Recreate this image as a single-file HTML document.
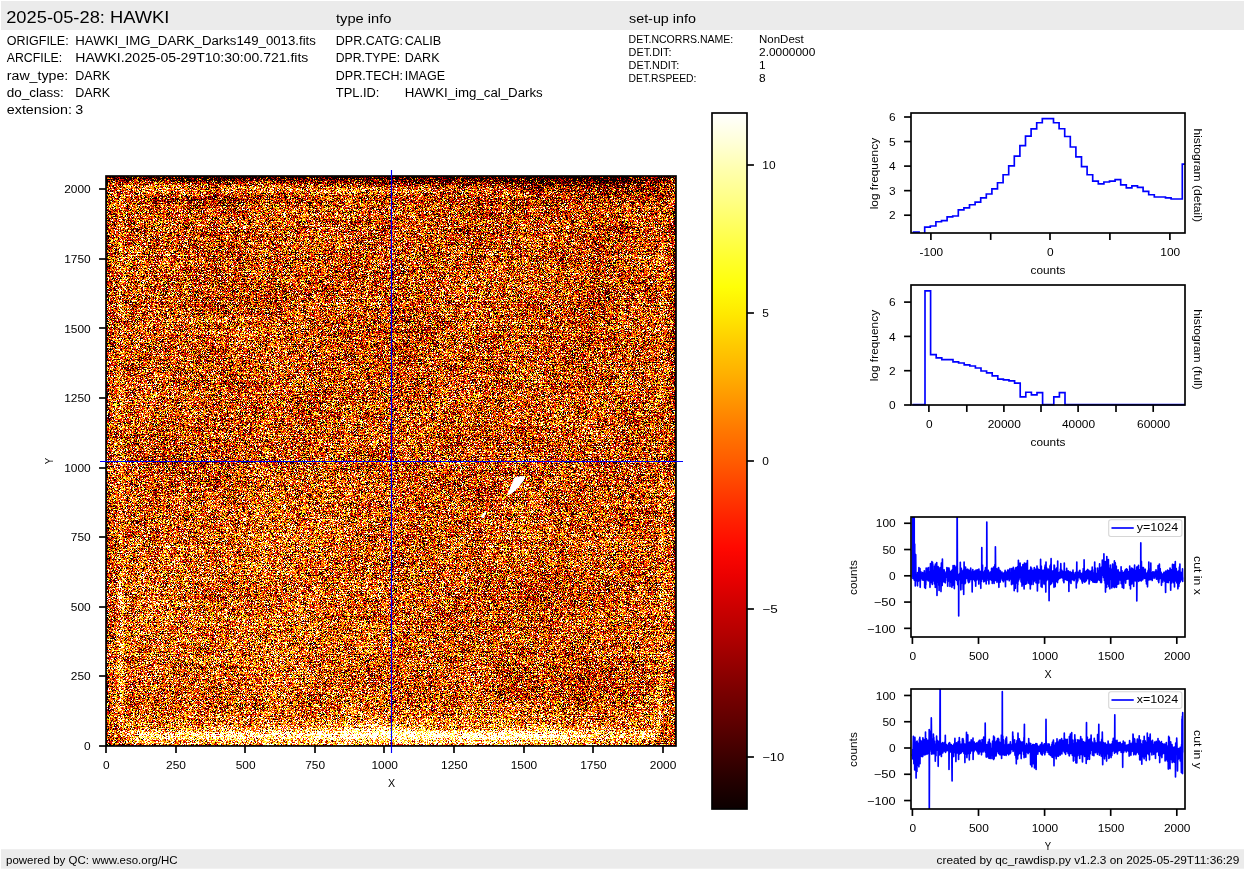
<!DOCTYPE html>
<html><head><meta charset="utf-8"><title>2025-05-28: HAWKI</title>
<style>
html,body{margin:0;padding:0;background:#fff;overflow:hidden}
svg{display:block}
text{font-family:"Liberation Sans",sans-serif;fill:#000;white-space:pre}
svg{will-change:transform}
</style></head><body>
<svg width="1245" height="870" viewBox="0 0 1245 870">
<rect x="0" y="0" width="1245" height="870" fill="#fff"/>
<rect x="1" y="1" width="1243" height="29" fill="#ebebeb"/>
<rect x="1" y="849.2" width="1243" height="19.5" fill="#ebebeb"/>
<text x="6.20" y="23.00" font-size="17.17" textLength="163.12" lengthAdjust="spacingAndGlyphs">2025-05-28: HAWKI</text>
<text x="336.00" y="23.00" font-size="12.88" textLength="55.34" lengthAdjust="spacingAndGlyphs">type info</text>
<text x="629.00" y="23.00" font-size="12.88" textLength="66.89" lengthAdjust="spacingAndGlyphs">set-up info</text>
<text x="6.80" y="45.00" font-size="12.88" textLength="61.85" lengthAdjust="spacingAndGlyphs">ORIGFILE:</text>
<text x="75.30" y="45.00" font-size="12.88" textLength="240.61" lengthAdjust="spacingAndGlyphs">HAWKI_IMG_DARK_Darks149_0013.fits</text>
<text x="6.80" y="62.00" font-size="12.88" textLength="55.29" lengthAdjust="spacingAndGlyphs">ARCFILE:</text>
<text x="75.30" y="62.00" font-size="12.88" textLength="233.00" lengthAdjust="spacingAndGlyphs">HAWKI.2025-05-29T10:30:00.721.fits</text>
<text x="6.80" y="80.00" font-size="12.88" textLength="61.41" lengthAdjust="spacingAndGlyphs">raw_type:</text>
<text x="75.30" y="80.00" font-size="12.88" textLength="34.84" lengthAdjust="spacingAndGlyphs">DARK</text>
<text x="6.80" y="97.00" font-size="12.88" textLength="57.07" lengthAdjust="spacingAndGlyphs">do_class:</text>
<text x="75.30" y="97.00" font-size="12.88" textLength="34.84" lengthAdjust="spacingAndGlyphs">DARK</text>
<text x="6.80" y="114.00" font-size="12.88" textLength="65.15" lengthAdjust="spacingAndGlyphs">extension:</text>
<text x="75.30" y="114.00" font-size="12.88" textLength="7.95" lengthAdjust="spacingAndGlyphs">3</text>
<text x="335.80" y="45.00" font-size="12.88" textLength="67.22" lengthAdjust="spacingAndGlyphs">DPR.CATG:</text>
<text x="404.70" y="45.00" font-size="12.88" textLength="36.51" lengthAdjust="spacingAndGlyphs">CALIB</text>
<text x="335.80" y="62.00" font-size="12.88" textLength="64.29" lengthAdjust="spacingAndGlyphs">DPR.TYPE:</text>
<text x="404.70" y="62.00" font-size="12.88" textLength="34.84" lengthAdjust="spacingAndGlyphs">DARK</text>
<text x="335.80" y="80.00" font-size="12.88" textLength="67.25" lengthAdjust="spacingAndGlyphs">DPR.TECH:</text>
<text x="404.70" y="80.00" font-size="12.88" textLength="40.39" lengthAdjust="spacingAndGlyphs">IMAGE</text>
<text x="335.80" y="97.00" font-size="12.88" textLength="43.63" lengthAdjust="spacingAndGlyphs">TPL.ID:</text>
<text x="404.70" y="97.00" font-size="12.88" textLength="138.03" lengthAdjust="spacingAndGlyphs">HAWKI_img_cal_Darks</text>
<text x="628.60" y="43.00" font-size="10.73" textLength="104.70" lengthAdjust="spacingAndGlyphs">DET.NCORRS.NAME:</text>
<text x="759.00" y="43.00" font-size="10.73" textLength="44.71" lengthAdjust="spacingAndGlyphs">NonDest</text>
<text x="628.60" y="56.00" font-size="10.73" textLength="42.86" lengthAdjust="spacingAndGlyphs">DET.DIT:</text>
<text x="759.00" y="56.00" font-size="10.73" textLength="56.33" lengthAdjust="spacingAndGlyphs">2.0000000</text>
<text x="628.60" y="69.00" font-size="10.73" textLength="50.65" lengthAdjust="spacingAndGlyphs">DET.NDIT:</text>
<text x="759.00" y="69.00" font-size="10.73" textLength="6.63" lengthAdjust="spacingAndGlyphs">1</text>
<text x="628.60" y="82.00" font-size="10.73" textLength="67.87" lengthAdjust="spacingAndGlyphs">DET.RSPEED:</text>
<text x="759.00" y="82.00" font-size="10.73" textLength="6.63" lengthAdjust="spacingAndGlyphs">8</text>
<text x="6.00" y="864.00" font-size="10.73" textLength="171.63" lengthAdjust="spacingAndGlyphs">powered by QC: www.eso.org/HC</text>
<text x="936.59" y="864.00" font-size="10.73" textLength="302.71" lengthAdjust="spacingAndGlyphs">created by qc_rawdisp.py v1.2.3 on 2025-05-29T11:36:29</text>
<defs>
<filter id="noise" filterUnits="userSpaceOnUse" x="106.0" y="176.0" width="570.0" height="570.0" color-interpolation-filters="sRGB">
<feTurbulence type="fractalNoise" baseFrequency="3.17 2.63" numOctaves="2" seed="7" result="t"/>
<feColorMatrix in="t" type="matrix" values="1 0 0 0 0  1 0 0 0 0  1 0 0 0 0  0 0 0 0 1" result="g"/>
<feTurbulence type="fractalNoise" baseFrequency="0.016" numOctaves="3" seed="3" result="t2"/>
<feColorMatrix in="t2" type="matrix" values="0 1 0 0 0  0 1 0 0 0  0 1 0 0 0  0 0 0 0 1" result="l"/>
<feTurbulence type="fractalNoise" baseFrequency="0.007 0.9" numOctaves="1" seed="11" result="t3"/>
<feColorMatrix in="t3" type="matrix" values="1 0 0 0 0  1 0 0 0 0  1 0 0 0 0  0 0 0 0 1" result="s"/>
<feGaussianBlur in="SourceGraphic" stdDeviation="1.6" result="m"/>
<feComposite in="l" in2="m" operator="arithmetic" k1="0" k2="0.1" k3="1" k4="-0.050" result="m2"/>
<feComposite in="s" in2="m2" operator="arithmetic" k1="0" k2="0.25" k3="1" k4="-0.125" result="m3"/>
<feComposite in="g" in2="m3" operator="arithmetic" k1="0" k2="3.1" k3="2" k4="-2.050" result="u"/>
<feColorMatrix in="u" type="matrix" values="1 0 0 0 0  1 0 0 0 0  1 0 0 0 0  0 0 0 0 1" result="u1"/>
<feComponentTransfer in="u1">
<feFuncR type="table" tableValues="0.042 0.093 0.145 0.196 0.247 0.299 0.350 0.402 0.453 0.505 0.556 0.608 0.659 0.711 0.762 0.814 0.865 0.917 0.968 1.000 1.000 1.000 1.000 1.000 1.000 1.000 1.000 1.000 1.000 1.000 1.000 1.000 1.000 1.000 1.000 1.000 1.000 1.000 1.000 1.000 1.000 1.000 1.000 1.000 1.000 1.000 1.000 1.000 1.000 1.000 1.000 1.000"/>
<feFuncG type="table" tableValues="0.000 0.000 0.000 0.000 0.000 0.000 0.000 0.000 0.000 0.000 0.000 0.000 0.000 0.000 0.000 0.000 0.000 0.000 0.000 0.020 0.071 0.123 0.174 0.225 0.277 0.328 0.380 0.431 0.483 0.534 0.586 0.637 0.689 0.740 0.792 0.843 0.895 0.946 0.998 1.000 1.000 1.000 1.000 1.000 1.000 1.000 1.000 1.000 1.000 1.000 1.000 1.000"/>
<feFuncB type="table" tableValues="0.000 0.000 0.000 0.000 0.000 0.000 0.000 0.000 0.000 0.000 0.000 0.000 0.000 0.000 0.000 0.000 0.000 0.000 0.000 0.000 0.000 0.000 0.000 0.000 0.000 0.000 0.000 0.000 0.000 0.000 0.000 0.000 0.000 0.000 0.000 0.000 0.000 0.000 0.000 0.074 0.151 0.228 0.305 0.382 0.460 0.537 0.614 0.691 0.768 0.846 0.923 1.000"/>
</feComponentTransfer>
</filter>
<linearGradient id="gtopL" x1="0" y1="0" x2="0" y2="1"><stop offset="0.000" stop-color="#2d2d2d"/><stop offset="0.180" stop-color="#464646"/><stop offset="0.320" stop-color="#666666"/><stop offset="0.450" stop-color="#808080"/><stop offset="0.800" stop-color="#808080"/><stop offset="1.000" stop-color="#767676"/></linearGradient>
<linearGradient id="gtopR" x1="0" y1="0" x2="0" y2="1"><stop offset="0.000" stop-color="#242424"/><stop offset="0.200" stop-color="#393939"/><stop offset="0.450" stop-color="#525252"/><stop offset="0.750" stop-color="#666666"/><stop offset="1.000" stop-color="#767676"/></linearGradient>
<linearGradient id="gbot" x1="0" y1="0" x2="0" y2="1"><stop offset="0.000" stop-color="#767676"/><stop offset="0.261" stop-color="#808080"/><stop offset="0.435" stop-color="#878787"/><stop offset="0.609" stop-color="#969696"/><stop offset="0.707" stop-color="#bfbfbf"/><stop offset="0.739" stop-color="#d2d2d2"/><stop offset="0.837" stop-color="#d2d2d2"/><stop offset="0.870" stop-color="#9e9e9e"/><stop offset="0.924" stop-color="#9c9c9c"/><stop offset="0.957" stop-color="#b9b9b9"/><stop offset="1.000" stop-color="#b9b9b9"/></linearGradient>
<linearGradient id="hmask" x1="0" y1="0" x2="1" y2="0"><stop offset="0.000" stop-color="#000000"/><stop offset="0.026" stop-color="#adadad"/><stop offset="0.220" stop-color="#d1d1d1"/><stop offset="0.404" stop-color="#ffffff"/><stop offset="0.780" stop-color="#ffffff"/><stop offset="0.881" stop-color="#9e9e9e"/><stop offset="0.972" stop-color="#808080"/><stop offset="0.996" stop-color="#000000"/></linearGradient>
<linearGradient id="hmaskT" x1="0" y1="0" x2="1" y2="0"><stop offset="0" stop-color="#000"/><stop offset="0.35" stop-color="#333"/><stop offset="0.9" stop-color="#fff"/><stop offset="1" stop-color="#fff"/></linearGradient>
<linearGradient id="lstreak" x1="0" y1="0" x2="0" y2="1"><stop offset="0" stop-color="#fff" stop-opacity="0"/><stop offset="0.5" stop-color="#fff" stop-opacity="0.7"/><stop offset="1" stop-color="#fff" stop-opacity="1"/></linearGradient>
<mask id="mH" maskUnits="userSpaceOnUse" x="100" y="690" width="600" height="60"><rect x="120" y="690" width="545" height="60" fill="url(#hmask)"/></mask>
<mask id="mT" maskUnits="userSpaceOnUse" x="100" y="170" width="600" height="40"><rect x="106.0" y="170" width="570.0" height="40" fill="url(#hmaskT)"/></mask>
<radialGradient id="rb1"><stop offset="0" stop-color="#fff" stop-opacity="0.07"/><stop offset="0.6" stop-color="#fff" stop-opacity="0.042"/><stop offset="1" stop-color="#fff" stop-opacity="0"/></radialGradient>
<radialGradient id="rb2"><stop offset="0" stop-color="#000" stop-opacity="0.07"/><stop offset="0.6" stop-color="#000" stop-opacity="0.042"/><stop offset="1" stop-color="#000" stop-opacity="0"/></radialGradient>
<radialGradient id="rb3"><stop offset="0" stop-color="#000" stop-opacity="0.03"/><stop offset="0.6" stop-color="#000" stop-opacity="0.018"/><stop offset="1" stop-color="#000" stop-opacity="0"/></radialGradient>
</defs>
<clipPath id="imclip"><rect x="106.0" y="176.0" width="570.0" height="570.0"/></clipPath>
<g filter="url(#noise)"><g clip-path="url(#imclip)">
<rect x="106.0" y="176.0" width="570.0" height="570.0" fill="#767676"/>
<ellipse cx="260" cy="600" rx="210" ry="170" fill="url(#rb1)"/>
<ellipse cx="575" cy="690" rx="120" ry="50" fill="url(#rb2)"/>
<ellipse cx="560" cy="270" rx="200" ry="140" fill="url(#rb3)"/>
<rect x="106.0" y="176.0" width="570.0" height="20" fill="url(#gtopL)"/>
<rect x="106.0" y="176.0" width="570.0" height="22" fill="url(#gtopR)" mask="url(#mT)"/>
<path d="M130,236 L130,214 Q130,200 144,200 L600,200" fill="none" stroke="#696969" stroke-width="8"/>
<rect x="640" y="176.0" width="36" height="26" fill="#5c5c5c" opacity="0.6"/>
<rect x="668" y="176.0" width="8" height="300" fill="#696969" opacity="0.8"/>
<rect x="120" y="700" width="545" height="46" fill="url(#gbot)" mask="url(#mH)"/>
<path d="M121,460 L121,204 Q121,190 135,190 L520,190" fill="none" stroke="#8c8c8c" stroke-width="4.5" opacity="0.8"/>
<path d="M661,250 L661,460" fill="none" stroke="#868686" stroke-width="4.5" opacity="0.7"/>
<path d="M121,440 L121,600" fill="none" stroke="#8f8f8f" stroke-width="4.5" opacity="0.8"/>
<path d="M661,440 L661,705" fill="none" stroke="#8a8a8a" stroke-width="4.5" opacity="0.8"/>
<path d="M121,580 L121,722 Q121,735 135,735" fill="none" stroke="#a3a3a3" stroke-width="4.5" stroke-linecap="round" opacity="0.9"/>
<path d="M640,736 Q660,736 660,718 L660,700" fill="none" stroke="#b5b5b5" stroke-width="4.5" stroke-linecap="round" opacity="0.9"/>
<rect x="106.0" y="734" width="13" height="12" fill="#6a6a6a"/>
</g></g>
<path d="M515,477.5 L524.5,476.5 L523,481 L516,489.5 L511,493.5 L508,494.5 L510.5,488 L513.5,481 Z" fill="#fff" stroke="#fff" stroke-width="1" stroke-linejoin="round"/>
<path d="M482.3,516.5 L485,513.2" stroke="#fff" stroke-width="2.6" stroke-linecap="round"/>
<rect x="106.00" y="176.00" width="570.00" height="570.00" fill="none" stroke="#000" stroke-width="1.67" stroke-linejoin="miter"/>
<line x1="106.00" y1="746.00" x2="106.00" y2="752.94" stroke="#000" stroke-width="1.67" stroke-linecap="butt"/>
<line x1="106.00" y1="746.00" x2="99.06" y2="746.00" stroke="#000" stroke-width="1.67" stroke-linecap="butt"/>
<text x="103.13" y="769.00" font-size="10.73" textLength="6.63" lengthAdjust="spacingAndGlyphs">0</text>
<text x="84.07" y="750.00" font-size="10.73" textLength="6.63" lengthAdjust="spacingAndGlyphs">0</text>
<line x1="176.00" y1="746.00" x2="176.00" y2="752.94" stroke="#000" stroke-width="1.67" stroke-linecap="butt"/>
<line x1="106.00" y1="676.00" x2="99.06" y2="676.00" stroke="#000" stroke-width="1.67" stroke-linecap="butt"/>
<text x="166.08" y="769.00" font-size="10.73" textLength="19.88" lengthAdjust="spacingAndGlyphs">250</text>
<text x="70.82" y="680.00" font-size="10.73" textLength="19.88" lengthAdjust="spacingAndGlyphs">250</text>
<line x1="245.00" y1="746.00" x2="245.00" y2="752.94" stroke="#000" stroke-width="1.67" stroke-linecap="butt"/>
<line x1="106.00" y1="607.00" x2="99.06" y2="607.00" stroke="#000" stroke-width="1.67" stroke-linecap="butt"/>
<text x="235.66" y="769.00" font-size="10.73" textLength="19.88" lengthAdjust="spacingAndGlyphs">500</text>
<text x="70.82" y="611.00" font-size="10.73" textLength="19.88" lengthAdjust="spacingAndGlyphs">500</text>
<line x1="315.00" y1="746.00" x2="315.00" y2="752.94" stroke="#000" stroke-width="1.67" stroke-linecap="butt"/>
<line x1="106.00" y1="537.00" x2="99.06" y2="537.00" stroke="#000" stroke-width="1.67" stroke-linecap="butt"/>
<text x="305.24" y="769.00" font-size="10.73" textLength="19.88" lengthAdjust="spacingAndGlyphs">750</text>
<text x="70.82" y="541.00" font-size="10.73" textLength="19.88" lengthAdjust="spacingAndGlyphs">750</text>
<line x1="384.00" y1="746.00" x2="384.00" y2="752.94" stroke="#000" stroke-width="1.67" stroke-linecap="butt"/>
<line x1="106.00" y1="468.00" x2="99.06" y2="468.00" stroke="#000" stroke-width="1.67" stroke-linecap="butt"/>
<text x="371.50" y="769.00" font-size="10.73" textLength="26.51" lengthAdjust="spacingAndGlyphs">1000</text>
<text x="64.19" y="472.00" font-size="10.73" textLength="26.51" lengthAdjust="spacingAndGlyphs">1000</text>
<line x1="454.00" y1="746.00" x2="454.00" y2="752.94" stroke="#000" stroke-width="1.67" stroke-linecap="butt"/>
<line x1="106.00" y1="398.00" x2="99.06" y2="398.00" stroke="#000" stroke-width="1.67" stroke-linecap="butt"/>
<text x="441.08" y="769.00" font-size="10.73" textLength="26.51" lengthAdjust="spacingAndGlyphs">1250</text>
<text x="64.19" y="402.00" font-size="10.73" textLength="26.51" lengthAdjust="spacingAndGlyphs">1250</text>
<line x1="524.00" y1="746.00" x2="524.00" y2="752.94" stroke="#000" stroke-width="1.67" stroke-linecap="butt"/>
<line x1="106.00" y1="328.00" x2="99.06" y2="328.00" stroke="#000" stroke-width="1.67" stroke-linecap="butt"/>
<text x="510.66" y="769.00" font-size="10.73" textLength="26.51" lengthAdjust="spacingAndGlyphs">1500</text>
<text x="64.19" y="333.00" font-size="10.73" textLength="26.51" lengthAdjust="spacingAndGlyphs">1500</text>
<line x1="593.00" y1="746.00" x2="593.00" y2="752.94" stroke="#000" stroke-width="1.67" stroke-linecap="butt"/>
<line x1="106.00" y1="259.00" x2="99.06" y2="259.00" stroke="#000" stroke-width="1.67" stroke-linecap="butt"/>
<text x="580.24" y="769.00" font-size="10.73" textLength="26.51" lengthAdjust="spacingAndGlyphs">1750</text>
<text x="64.19" y="263.00" font-size="10.73" textLength="26.51" lengthAdjust="spacingAndGlyphs">1750</text>
<line x1="663.00" y1="746.00" x2="663.00" y2="752.94" stroke="#000" stroke-width="1.67" stroke-linecap="butt"/>
<line x1="106.00" y1="189.00" x2="99.06" y2="189.00" stroke="#000" stroke-width="1.67" stroke-linecap="butt"/>
<text x="649.82" y="769.00" font-size="10.73" textLength="26.51" lengthAdjust="spacingAndGlyphs">2000</text>
<text x="64.19" y="193.00" font-size="10.73" textLength="26.51" lengthAdjust="spacingAndGlyphs">2000</text>
<text x="388.03" y="787.00" font-size="10.73" textLength="7.14" lengthAdjust="spacingAndGlyphs">X</text>
<text transform="translate(53.00,461.00) rotate(-90)" x="-3.18" y="0" font-size="10.73" textLength="6.36" lengthAdjust="spacingAndGlyphs">Y</text>
<line x1="391.50" y1="170.00" x2="391.50" y2="753.00" stroke="#0000ff" stroke-width="1.15" stroke-linecap="butt"/>
<line x1="100.00" y1="461.50" x2="683.00" y2="461.50" stroke="#0000ff" stroke-width="1.15" stroke-linecap="butt"/>
<defs><linearGradient id="cb" x1="0" y1="0" x2="0" y2="1"><stop offset="0.0000" stop-color="#ffffff"/><stop offset="0.0417" stop-color="#ffffd8"/><stop offset="0.0833" stop-color="#ffffac"/><stop offset="0.1250" stop-color="#ffff85"/><stop offset="0.1667" stop-color="#ffff5a"/><stop offset="0.2083" stop-color="#ffff2e"/><stop offset="0.2500" stop-color="#ffff07"/><stop offset="0.2917" stop-color="#ffe700"/><stop offset="0.3333" stop-color="#ffca00"/><stop offset="0.3750" stop-color="#ffb000"/><stop offset="0.4167" stop-color="#ff9300"/><stop offset="0.4583" stop-color="#ff7600"/><stop offset="0.5000" stop-color="#ff5c00"/><stop offset="0.5417" stop-color="#ff3f00"/><stop offset="0.5833" stop-color="#ff2200"/><stop offset="0.6250" stop-color="#ff0800"/><stop offset="0.6667" stop-color="#ea0000"/><stop offset="0.7083" stop-color="#cd0000"/><stop offset="0.7500" stop-color="#b30000"/><stop offset="0.7917" stop-color="#960000"/><stop offset="0.8333" stop-color="#790000"/><stop offset="0.8750" stop-color="#5f0000"/><stop offset="0.9167" stop-color="#420000"/><stop offset="0.9583" stop-color="#250000"/><stop offset="1.0000" stop-color="#0b0000"/></linearGradient></defs>
<rect x="712.0" y="113.0" width="35.0" height="696.0" fill="url(#cb)"/>
<rect x="712.00" y="113.00" width="35.00" height="696.00" fill="none" stroke="#000" stroke-width="1.67" stroke-linejoin="miter"/>
<line x1="747.00" y1="165.00" x2="753.94" y2="165.00" stroke="#000" stroke-width="1.67" stroke-linecap="butt"/>
<text x="762.30" y="168.90" font-size="10.73" textLength="13.25" lengthAdjust="spacingAndGlyphs">10</text>
<line x1="747.00" y1="313.00" x2="753.94" y2="313.00" stroke="#000" stroke-width="1.67" stroke-linecap="butt"/>
<text x="762.30" y="316.90" font-size="10.73" textLength="6.63" lengthAdjust="spacingAndGlyphs">5</text>
<line x1="747.00" y1="461.00" x2="753.94" y2="461.00" stroke="#000" stroke-width="1.67" stroke-linecap="butt"/>
<text x="762.30" y="464.90" font-size="10.73" textLength="6.63" lengthAdjust="spacingAndGlyphs">0</text>
<line x1="747.00" y1="609.00" x2="753.94" y2="609.00" stroke="#000" stroke-width="1.67" stroke-linecap="butt"/>
<text x="762.30" y="612.90" font-size="10.73" textLength="15.36" lengthAdjust="spacingAndGlyphs">−5</text>
<line x1="747.00" y1="757.00" x2="753.94" y2="757.00" stroke="#000" stroke-width="1.67" stroke-linecap="butt"/>
<text x="762.30" y="760.90" font-size="10.73" textLength="21.98" lengthAdjust="spacingAndGlyphs">−10</text>
<clipPath id="c1"><rect x="911.0" y="113.0" width="274.0" height="120.0"/></clipPath>
<path d="M907.90,243.00L913.50,243.00L913.50,232.07L919.10,232.07L919.10,235.41L924.70,235.41L924.70,227.07L930.30,227.07L930.30,226.00L935.90,226.00L935.90,221.76L941.50,221.76L941.50,220.70L947.10,220.70L947.10,216.90L952.70,216.90L952.70,215.99L958.30,215.99L958.30,209.93L963.90,209.93L963.90,207.80L969.50,207.80L969.50,204.77L975.10,204.77L975.10,202.04L980.70,202.04L980.70,197.79L986.30,197.79L986.30,194.00L991.90,194.00L991.90,188.84L997.50,188.84L997.50,182.78L1003.10,182.78L1003.10,174.74L1008.70,174.74L1008.70,165.94L1014.30,165.94L1014.30,156.08L1019.90,156.08L1019.90,145.62L1025.50,145.62L1025.50,136.06L1031.10,136.06L1031.10,128.93L1036.70,128.93L1036.70,122.71L1042.30,122.71L1042.30,118.62L1047.90,118.62L1047.90,118.62L1053.50,118.62L1053.50,122.71L1059.10,122.71L1059.10,128.78L1064.70,128.78L1064.70,136.52L1070.30,136.52L1070.30,146.98L1075.90,146.98L1075.90,156.84L1081.50,156.84L1081.50,166.70L1087.10,166.70L1087.10,174.74L1092.70,174.74L1092.70,181.11L1098.30,181.11L1098.30,183.84L1103.90,183.84L1103.90,182.02L1109.50,182.02L1109.50,181.11L1115.10,181.11L1115.10,179.59L1120.70,179.59L1120.70,184.90L1126.30,184.90L1126.30,187.93L1131.90,187.93L1131.90,185.81L1137.50,185.81L1137.50,187.33L1143.10,187.33L1143.10,191.42L1148.70,191.42L1148.70,194.76L1154.30,194.76L1154.30,197.03L1159.90,197.03L1159.90,197.03L1165.50,197.03L1165.50,197.94L1171.10,197.94L1171.10,199.01L1176.70,199.01L1176.70,199.01L1182.30,199.01L1182.30,164.12L1187.90,164.12" fill="none" stroke="#0000ff" stroke-width="1.67" stroke-linejoin="miter" clip-path="url(#c1)"/>
<rect x="911.00" y="113.00" width="274.00" height="120.00" fill="none" stroke="#000" stroke-width="1.67" stroke-linejoin="miter"/>
<line x1="930.90" y1="233.00" x2="930.90" y2="239.94" stroke="#000" stroke-width="1.67" stroke-linecap="butt"/>
<text x="919.48" y="256.00" font-size="10.73" textLength="23.64" lengthAdjust="spacingAndGlyphs">-100</text>
<line x1="990.70" y1="233.00" x2="990.70" y2="239.94" stroke="#000" stroke-width="1.67" stroke-linecap="butt"/>
<line x1="1050.00" y1="233.00" x2="1050.00" y2="239.94" stroke="#000" stroke-width="1.67" stroke-linecap="butt"/>
<text x="1047.09" y="256.00" font-size="10.73" textLength="6.63" lengthAdjust="spacingAndGlyphs">0</text>
<line x1="1109.90" y1="233.00" x2="1109.90" y2="239.94" stroke="#000" stroke-width="1.67" stroke-linecap="butt"/>
<line x1="1169.90" y1="233.00" x2="1169.90" y2="239.94" stroke="#000" stroke-width="1.67" stroke-linecap="butt"/>
<text x="1160.36" y="256.00" font-size="10.73" textLength="19.88" lengthAdjust="spacingAndGlyphs">100</text>
<line x1="911.00" y1="117.00" x2="904.06" y2="117.00" stroke="#000" stroke-width="1.67" stroke-linecap="butt"/>
<text x="889.07" y="121.00" font-size="10.73" textLength="6.63" lengthAdjust="spacingAndGlyphs">6</text>
<line x1="911.00" y1="141.55" x2="904.06" y2="141.55" stroke="#000" stroke-width="1.67" stroke-linecap="butt"/>
<text x="889.07" y="146.00" font-size="10.73" textLength="6.63" lengthAdjust="spacingAndGlyphs">5</text>
<line x1="911.00" y1="166.10" x2="904.06" y2="166.10" stroke="#000" stroke-width="1.67" stroke-linecap="butt"/>
<text x="889.07" y="170.00" font-size="10.73" textLength="6.63" lengthAdjust="spacingAndGlyphs">4</text>
<line x1="911.00" y1="190.65" x2="904.06" y2="190.65" stroke="#000" stroke-width="1.67" stroke-linecap="butt"/>
<text x="889.07" y="195.00" font-size="10.73" textLength="6.63" lengthAdjust="spacingAndGlyphs">3</text>
<line x1="911.00" y1="215.20" x2="904.06" y2="215.20" stroke="#000" stroke-width="1.67" stroke-linecap="butt"/>
<text x="889.07" y="219.00" font-size="10.73" textLength="6.63" lengthAdjust="spacingAndGlyphs">2</text>
<text x="1030.59" y="274.00" font-size="10.73" textLength="34.82" lengthAdjust="spacingAndGlyphs">counts</text>
<text transform="translate(877.60,173.60) rotate(-90)" x="-35.72" y="0" font-size="10.73" textLength="71.44" lengthAdjust="spacingAndGlyphs">log frequency</text>
<text transform="translate(1193.90,175.20) rotate(90)" x="-46.76" y="0" font-size="10.73" textLength="93.52" lengthAdjust="spacingAndGlyphs">histogram (detail)</text>
<clipPath id="c2"><rect x="911.0" y="284.0" width="274.0" height="122.0"/></clipPath>
<path d="M912.50,404.68L925.00,404.68L925.00,290.92L930.60,290.92L930.60,354.62L936.20,354.62L936.20,357.81L941.80,357.81L941.80,359.63L947.40,359.63L947.40,359.63L953.00,359.63L953.00,361.91L958.60,361.91L958.60,362.97L964.20,362.97L964.20,364.94L969.80,364.94L969.80,366.00L975.40,366.00L975.40,367.97L981.00,367.97L981.00,371.01L986.60,371.01L986.60,372.83L992.20,372.83L992.20,375.86L997.80,375.86L997.80,379.04L1003.40,379.04L1003.40,379.80L1009.00,379.80L1009.00,380.86L1014.60,380.86L1014.60,383.14L1020.20,383.14L1020.20,396.79L1025.80,396.79L1025.80,392.24L1031.40,392.24L1031.40,394.82L1037.00,394.82L1037.00,392.70L1042.60,392.70L1042.60,404.68L1048.20,404.68L1048.20,404.68L1053.80,404.68L1053.80,396.79L1059.40,396.79L1059.40,392.70L1065.00,392.70L1065.00,404.68L1186.00,404.68" fill="none" stroke="#0000ff" stroke-width="1.67" stroke-linejoin="miter" clip-path="url(#c2)"/>
<rect x="911.00" y="285.00" width="274.00" height="120.00" fill="none" stroke="#000" stroke-width="1.67" stroke-linejoin="miter"/>
<line x1="928.90" y1="405.00" x2="928.90" y2="411.94" stroke="#000" stroke-width="1.67" stroke-linecap="butt"/>
<text x="925.99" y="428.00" font-size="10.73" textLength="6.63" lengthAdjust="spacingAndGlyphs">0</text>
<line x1="966.80" y1="405.00" x2="966.80" y2="411.94" stroke="#000" stroke-width="1.67" stroke-linecap="butt"/>
<line x1="1003.90" y1="405.00" x2="1003.90" y2="411.94" stroke="#000" stroke-width="1.67" stroke-linecap="butt"/>
<text x="987.73" y="428.00" font-size="10.73" textLength="33.14" lengthAdjust="spacingAndGlyphs">20000</text>
<line x1="1041.00" y1="405.00" x2="1041.00" y2="411.94" stroke="#000" stroke-width="1.67" stroke-linecap="butt"/>
<line x1="1078.10" y1="405.00" x2="1078.10" y2="411.94" stroke="#000" stroke-width="1.67" stroke-linecap="butt"/>
<text x="1061.93" y="428.00" font-size="10.73" textLength="33.14" lengthAdjust="spacingAndGlyphs">40000</text>
<line x1="1116.00" y1="405.00" x2="1116.00" y2="411.94" stroke="#000" stroke-width="1.67" stroke-linecap="butt"/>
<line x1="1153.20" y1="405.00" x2="1153.20" y2="411.94" stroke="#000" stroke-width="1.67" stroke-linecap="butt"/>
<text x="1137.03" y="428.00" font-size="10.73" textLength="33.14" lengthAdjust="spacingAndGlyphs">60000</text>
<line x1="911.00" y1="405.00" x2="904.06" y2="405.00" stroke="#000" stroke-width="1.67" stroke-linecap="butt"/>
<text x="889.07" y="409.00" font-size="10.73" textLength="6.63" lengthAdjust="spacingAndGlyphs">0</text>
<line x1="911.00" y1="370.70" x2="904.06" y2="370.70" stroke="#000" stroke-width="1.67" stroke-linecap="butt"/>
<text x="889.07" y="375.00" font-size="10.73" textLength="6.63" lengthAdjust="spacingAndGlyphs">2</text>
<line x1="911.00" y1="336.40" x2="904.06" y2="336.40" stroke="#000" stroke-width="1.67" stroke-linecap="butt"/>
<text x="889.07" y="341.00" font-size="10.73" textLength="6.63" lengthAdjust="spacingAndGlyphs">4</text>
<line x1="911.00" y1="302.10" x2="904.06" y2="302.10" stroke="#000" stroke-width="1.67" stroke-linecap="butt"/>
<text x="889.07" y="306.00" font-size="10.73" textLength="6.63" lengthAdjust="spacingAndGlyphs">6</text>
<text x="1030.59" y="446.00" font-size="10.73" textLength="34.82" lengthAdjust="spacingAndGlyphs">counts</text>
<text transform="translate(877.60,345.60) rotate(-90)" x="-35.72" y="0" font-size="10.73" textLength="71.44" lengthAdjust="spacingAndGlyphs">log frequency</text>
<text transform="translate(1193.90,349.50) rotate(90)" x="-40.15" y="0" font-size="10.73" textLength="80.30" lengthAdjust="spacingAndGlyphs">histogram (full)</text>
<clipPath id="c3"><rect x="911.0" y="517.0" width="274.0" height="120.0"/></clipPath>
<polyline points="912.3,577.9 912.4,574.6 912.6,511.0 912.7,574.6 912.8,578.3 913.0,575.4 913.1,511.0 913.2,577.8 913.4,570.4 913.5,571.4 913.6,511.0 913.8,578.9 913.9,575.7 914.0,571.5 914.2,511.0 914.3,580.2 914.4,569.4 914.5,578.7 914.7,544.2 914.8,577.0 914.9,577.5 915.1,574.3 915.2,575.9 915.3,586.0 915.5,574.6 915.6,573.6 915.7,554.7 915.9,578.4 916.0,578.2 916.1,580.6 916.3,579.0 916.4,575.6 916.5,575.8 916.7,576.5 916.8,578.4 916.9,576.7 917.1,578.5 917.2,579.2 917.3,575.1 917.5,585.8 917.6,572.6 917.7,573.8 917.9,581.0 918.0,575.0 918.1,578.6 918.2,575.6 918.4,575.6 918.5,581.1 918.6,576.3 918.8,576.4 918.9,567.5 919.0,579.0 919.2,573.7 919.3,578.8 919.4,576.6 919.6,578.1 919.7,571.6 919.8,574.1 920.0,568.7 920.1,573.8 920.2,587.3 920.4,573.2 920.5,577.5 920.6,575.9 920.8,571.7 920.9,576.9 921.0,575.1 921.2,575.8 921.3,573.8 921.4,576.8 921.6,576.2 921.7,574.9 921.8,575.4 921.9,578.4 922.1,572.8 922.2,579.9 922.3,579.6 922.5,579.9 922.6,572.5 922.7,576.9 922.9,578.9 923.0,579.5 923.1,574.3 923.3,579.3 923.4,580.1 923.5,573.6 923.7,578.8 923.8,576.8 923.9,575.7 924.1,577.3 924.2,575.9 924.3,570.8 924.5,577.6 924.6,580.3 924.7,587.6 924.9,576.5 925.0,577.0 925.1,574.7 925.3,577.5 925.4,577.5 925.5,588.3 925.6,577.7 925.8,584.9 925.9,577.2 926.0,575.3 926.2,568.1 926.3,573.8 926.4,578.0 926.6,568.7 926.7,574.3 926.8,579.6 927.0,571.7 927.1,575.6 927.2,578.3 927.4,578.4 927.5,579.9 927.6,575.5 927.8,571.1 927.9,577.1 928.0,573.9 928.2,567.5 928.3,581.0 928.4,574.6 928.6,577.1 928.7,580.4 928.8,580.3 929.0,575.8 929.1,573.8 929.2,578.1 929.3,575.5 929.5,576.9 929.6,574.3 929.7,571.7 929.9,573.6 930.0,587.3 930.1,567.2 930.3,572.8 930.4,575.1 930.5,563.5 930.7,580.0 930.8,577.3 930.9,572.0 931.1,572.7 931.2,568.3 931.3,575.7 931.5,582.7 931.6,566.4 931.7,570.5 931.9,561.7 932.0,573.9 932.1,575.5 932.3,584.5 932.4,577.7 932.5,562.3 932.7,568.0 932.8,564.3 932.9,576.9 933.0,577.0 933.2,577.5 933.3,580.2 933.4,574.6 933.6,570.4 933.7,572.6 933.8,573.8 934.0,581.3 934.1,575.1 934.2,579.2 934.4,578.8 934.5,583.9 934.6,566.1 934.8,571.2 934.9,580.5 935.0,571.2 935.2,569.1 935.3,587.4 935.4,564.2 935.6,577.6 935.7,572.5 935.8,576.3 936.0,576.8 936.1,576.0 936.2,566.7 936.4,565.2 936.5,577.3 936.6,580.2 936.7,562.6 936.9,580.5 937.0,595.5 937.1,575.5 937.3,573.4 937.4,570.7 937.5,573.8 937.7,579.9 937.8,573.3 937.9,574.5 938.1,566.7 938.2,567.1 938.3,582.1 938.5,580.7 938.6,568.8 938.7,578.3 938.9,585.7 939.0,578.4 939.1,590.4 939.3,570.1 939.4,580.5 939.5,572.6 939.7,572.0 939.8,579.0 939.9,576.6 940.1,567.5 940.2,567.7 940.3,571.7 940.4,574.2 940.6,570.5 940.7,576.3 940.8,576.1 941.0,591.6 941.1,585.5 941.2,576.1 941.4,563.1 941.5,576.6 941.6,571.9 941.8,569.7 941.9,576.5 942.0,570.4 942.2,585.5 942.3,575.3 942.4,559.1 942.6,575.1 942.7,580.9 942.8,571.0 943.0,576.8 943.1,580.6 943.2,577.4 943.4,578.1 943.5,572.5 943.6,573.7 943.8,576.9 943.9,578.6 944.0,582.1 944.1,569.9 944.3,574.2 944.4,572.9 944.5,581.0 944.7,581.4 944.8,578.8 944.9,572.9 945.1,575.2 945.2,579.6 945.3,582.8 945.5,575.2 945.6,580.7 945.7,577.2 945.9,577.1 946.0,574.5 946.1,574.4 946.3,571.5 946.4,571.6 946.5,575.1 946.7,572.2 946.8,577.2 946.9,567.5 947.1,573.5 947.2,577.1 947.3,573.3 947.5,570.6 947.6,579.2 947.7,586.2 947.8,570.4 948.0,575.6 948.1,572.6 948.2,581.6 948.4,568.0 948.5,572.4 948.6,576.3 948.8,577.3 948.9,575.2 949.0,568.1 949.2,577.7 949.3,580.7 949.4,570.0 949.6,575.9 949.7,576.3 949.8,571.2 950.0,586.4 950.1,573.3 950.2,577.2 950.4,577.0 950.5,575.4 950.6,580.2 950.8,571.8 950.9,578.9 951.0,579.9 951.2,579.7 951.3,575.0 951.4,572.2 951.5,578.5 951.7,582.8 951.8,570.7 951.9,587.3 952.1,570.1 952.2,576.0 952.3,579.0 952.5,578.7 952.6,585.5 952.7,571.4 952.9,576.7 953.0,571.1 953.1,565.6 953.3,576.7 953.4,576.0 953.5,580.8 953.7,582.5 953.8,578.8 953.9,579.2 954.1,582.2 954.2,573.1 954.3,588.6 954.5,582.2 954.6,565.7 954.7,570.5 954.9,573.1 955.0,573.4 955.1,566.8 955.2,573.0 955.4,575.3 955.5,570.7 955.6,576.1 955.8,579.4 955.9,579.3 956.0,579.3 956.2,575.9 956.3,577.4 956.4,571.8 956.6,580.3 956.7,576.6 956.8,566.1 957.0,575.5 957.1,511.0 957.2,511.0 957.4,568.9 957.5,571.9 957.6,582.9 957.8,584.7 957.9,577.7 958.0,583.8 958.2,578.1 958.3,582.2 958.4,584.4 958.6,574.6 958.7,616.0 958.8,579.3 958.9,580.7 959.1,578.5 959.2,577.8 959.3,577.8 959.5,576.0 959.6,578.0 959.7,573.7 959.9,573.0 960.0,573.8 960.1,579.2 960.3,562.3 960.4,573.4 960.5,576.7 960.7,575.9 960.8,588.7 960.9,589.8 961.1,573.9 961.2,574.0 961.3,568.4 961.5,571.9 961.6,574.5 961.7,575.6 961.9,583.1 962.0,571.1 962.1,578.8 962.3,573.1 962.4,575.7 962.5,574.3 962.6,571.1 962.8,578.2 962.9,577.7 963.0,580.0 963.2,589.4 963.3,587.3 963.4,577.5 963.6,569.8 963.7,594.4 963.8,575.7 964.0,571.7 964.1,562.2 964.2,573.9 964.4,567.9 964.5,579.1 964.6,578.3 964.8,579.0 964.9,583.7 965.0,580.9 965.2,568.7 965.3,577.5 965.4,583.0 965.6,567.2 965.7,571.1 965.8,573.3 966.0,573.2 966.1,577.4 966.2,578.5 966.3,572.4 966.5,577.0 966.6,571.5 966.7,573.4 966.9,577.8 967.0,576.6 967.1,570.8 967.3,569.3 967.4,578.4 967.5,570.4 967.7,570.3 967.8,569.3 967.9,576.5 968.1,581.3 968.2,577.3 968.3,577.9 968.5,574.8 968.6,582.7 968.7,570.4 968.9,574.5 969.0,573.9 969.1,580.5 969.3,575.8 969.4,570.4 969.5,581.9 969.7,574.5 969.8,573.0 969.9,578.4 970.0,572.5 970.2,577.0 970.3,571.0 970.4,573.7 970.6,579.6 970.7,568.2 970.8,572.6 971.0,570.9 971.1,573.7 971.2,578.1 971.4,572.7 971.5,572.5 971.6,575.9 971.8,572.9 971.9,579.4 972.0,575.0 972.2,592.0 972.3,574.5 972.4,577.4 972.6,577.9 972.7,575.5 972.8,569.6 973.0,578.4 973.1,577.7 973.2,572.2 973.4,577.1 973.5,579.1 973.6,575.0 973.7,575.4 973.9,574.6 974.0,571.6 974.1,573.6 974.3,574.1 974.4,574.9 974.5,580.6 974.7,578.4 974.8,571.1 974.9,573.2 975.1,574.2 975.2,573.8 975.3,581.7 975.5,574.7 975.6,578.4 975.7,586.2 975.9,577.8 976.0,570.0 976.1,574.4 976.3,576.7 976.4,573.8 976.5,576.5 976.7,574.7 976.8,571.9 976.9,580.0 977.1,573.6 977.2,573.9 977.3,573.0 977.4,569.9 977.6,573.5 977.7,573.3 977.8,578.2 978.0,573.6 978.1,573.8 978.2,578.7 978.4,578.3 978.5,576.0 978.6,574.9 978.8,584.1 978.9,569.0 979.0,575.0 979.2,576.2 979.3,574.9 979.4,574.4 979.6,578.6 979.7,579.0 979.8,576.4 980.0,578.4 980.1,575.1 980.2,571.4 980.4,579.9 980.5,574.3 980.6,580.5 980.8,588.3 980.9,574.1 981.0,575.9 981.2,578.0 981.3,578.4 981.4,581.6 981.5,575.2 981.7,574.9 981.8,547.5 981.9,578.8 982.1,577.9 982.2,575.8 982.3,575.0 982.5,565.1 982.6,571.6 982.7,572.5 982.9,571.6 983.0,579.2 983.1,576.1 983.3,572.2 983.4,574.8 983.5,575.6 983.7,581.8 983.8,581.5 983.9,573.4 984.1,574.6 984.2,576.6 984.3,577.0 984.5,581.2 984.6,574.5 984.7,572.4 984.9,570.3 985.0,575.5 985.1,576.4 985.2,579.3 985.4,571.7 985.5,567.7 985.6,569.0 985.8,574.7 985.9,575.4 986.0,577.6 986.2,584.0 986.3,576.9 986.4,573.7 986.6,580.5 986.7,578.5 986.8,522.1 987.0,571.3 987.1,574.0 987.2,575.5 987.4,576.6 987.5,577.9 987.6,576.0 987.8,576.8 987.9,576.6 988.0,575.8 988.2,575.3 988.3,570.3 988.4,580.8 988.6,574.8 988.7,577.9 988.8,579.7 988.9,584.0 989.1,573.6 989.2,579.2 989.3,578.4 989.5,574.1 989.6,579.6 989.7,575.6 989.9,576.0 990.0,572.9 990.1,572.1 990.3,578.8 990.4,572.5 990.5,576.1 990.7,575.3 990.8,576.5 990.9,572.9 991.1,580.1 991.2,574.8 991.3,571.5 991.5,576.8 991.6,568.4 991.7,578.4 991.9,577.2 992.0,577.5 992.1,578.0 992.3,583.4 992.4,577.7 992.5,575.9 992.6,568.7 992.8,572.6 992.9,570.3 993.0,581.2 993.2,572.8 993.3,575.1 993.4,574.9 993.6,567.0 993.7,571.5 993.8,574.6 994.0,575.1 994.1,583.4 994.2,573.0 994.4,578.3 994.5,575.1 994.6,575.4 994.8,572.3 994.9,564.7 995.0,572.3 995.2,571.3 995.3,576.5 995.4,546.8 995.6,568.0 995.7,580.6 995.8,568.7 996.0,578.1 996.1,580.1 996.2,570.1 996.3,568.5 996.5,578.1 996.6,577.8 996.7,574.5 996.9,575.3 997.0,582.3 997.1,577.7 997.3,569.1 997.4,573.5 997.5,573.2 997.7,570.3 997.8,573.5 997.9,576.8 998.1,580.9 998.2,574.3 998.3,579.3 998.5,567.5 998.6,575.2 998.7,568.1 998.9,587.3 999.0,575.5 999.1,580.5 999.3,572.8 999.4,579.8 999.5,575.1 999.7,570.3 999.8,573.4 999.9,573.0 1000.0,577.8 1000.2,582.1 1000.3,578.1 1000.4,570.8 1000.6,575.9 1000.7,578.3 1000.8,576.1 1001.0,576.0 1001.1,576.0 1001.2,576.8 1001.4,578.0 1001.5,573.8 1001.6,572.7 1001.8,577.4 1001.9,577.3 1002.0,572.1 1002.2,580.1 1002.3,577.5 1002.4,576.8 1002.6,575.2 1002.7,576.5 1002.8,578.3 1003.0,576.2 1003.1,579.2 1003.2,580.8 1003.4,581.7 1003.5,573.5 1003.6,580.8 1003.7,573.0 1003.9,573.7 1004.0,573.3 1004.1,576.2 1004.3,577.3 1004.4,575.4 1004.5,577.5 1004.7,579.5 1004.8,572.0 1004.9,578.4 1005.1,570.4 1005.2,574.2 1005.3,577.1 1005.5,586.7 1005.6,572.0 1005.7,579.8 1005.9,578.5 1006.0,577.7 1006.1,575.2 1006.3,574.5 1006.4,575.6 1006.5,577.9 1006.7,577.3 1006.8,572.0 1006.9,572.2 1007.1,575.3 1007.2,579.8 1007.3,573.7 1007.4,574.8 1007.6,574.9 1007.7,570.2 1007.8,573.1 1008.0,578.8 1008.1,578.8 1008.2,571.2 1008.4,575.0 1008.5,572.8 1008.6,570.3 1008.8,578.8 1008.9,574.6 1009.0,570.3 1009.2,580.8 1009.3,579.3 1009.4,576.5 1009.6,577.2 1009.7,574.8 1009.8,571.9 1010.0,568.5 1010.1,574.6 1010.2,576.9 1010.4,575.1 1010.5,575.3 1010.6,576.9 1010.8,575.3 1010.9,575.4 1011.0,579.7 1011.1,573.3 1011.3,576.7 1011.4,579.0 1011.5,584.6 1011.7,577.2 1011.8,568.7 1011.9,573.5 1012.1,575.0 1012.2,578.3 1012.3,576.9 1012.5,572.0 1012.6,578.1 1012.7,572.3 1012.9,583.8 1013.0,574.6 1013.1,572.0 1013.3,567.4 1013.4,575.4 1013.5,571.2 1013.7,579.0 1013.8,579.5 1013.9,574.9 1014.1,570.2 1014.2,590.7 1014.3,576.2 1014.5,577.2 1014.6,573.4 1014.7,580.9 1014.8,587.8 1015.0,579.9 1015.1,582.1 1015.2,576.9 1015.4,588.3 1015.5,568.2 1015.6,577.2 1015.8,574.9 1015.9,575.5 1016.0,567.6 1016.2,577.5 1016.3,577.1 1016.4,569.3 1016.6,577.3 1016.7,583.1 1016.8,569.0 1017.0,573.6 1017.1,572.3 1017.2,572.1 1017.4,570.8 1017.5,591.7 1017.6,566.6 1017.8,585.0 1017.9,574.5 1018.0,574.0 1018.2,577.4 1018.3,571.8 1018.4,560.3 1018.5,580.9 1018.7,570.9 1018.8,570.3 1018.9,575.8 1019.1,579.2 1019.2,568.9 1019.3,571.7 1019.5,575.7 1019.6,576.8 1019.7,573.7 1019.9,570.1 1020.0,570.4 1020.1,563.0 1020.3,576.8 1020.4,571.7 1020.5,577.2 1020.7,570.8 1020.8,574.2 1020.9,578.0 1021.1,581.9 1021.2,578.9 1021.3,573.6 1021.5,567.1 1021.6,570.8 1021.7,581.2 1021.9,577.5 1022.0,586.2 1022.1,575.6 1022.2,574.7 1022.4,570.9 1022.5,574.0 1022.6,578.9 1022.8,583.3 1022.9,564.6 1023.0,584.3 1023.2,576.3 1023.3,573.8 1023.4,582.6 1023.6,576.3 1023.7,577.4 1023.8,565.6 1024.0,584.8 1024.1,588.9 1024.2,573.5 1024.4,563.0 1024.5,576.9 1024.6,577.9 1024.8,572.8 1024.9,572.5 1025.0,573.7 1025.2,581.2 1025.3,577.4 1025.4,584.2 1025.6,583.9 1025.7,579.0 1025.8,581.6 1025.9,578.3 1026.1,563.3 1026.2,573.6 1026.3,580.8 1026.5,581.9 1026.6,580.6 1026.7,583.6 1026.9,573.5 1027.0,572.6 1027.1,571.8 1027.3,574.1 1027.4,560.6 1027.5,575.0 1027.7,575.7 1027.8,574.6 1027.9,577.7 1028.1,580.5 1028.2,577.4 1028.3,570.6 1028.5,577.7 1028.6,583.1 1028.7,582.5 1028.9,581.4 1029.0,576.2 1029.1,573.9 1029.3,573.9 1029.4,570.4 1029.5,577.2 1029.6,572.1 1029.8,574.6 1029.9,572.7 1030.0,584.9 1030.2,570.1 1030.3,589.0 1030.4,581.3 1030.6,572.2 1030.7,577.7 1030.8,567.0 1031.0,575.1 1031.1,580.7 1031.2,584.6 1031.4,577.7 1031.5,568.6 1031.6,568.3 1031.8,572.4 1031.9,577.6 1032.0,575.4 1032.2,571.0 1032.3,579.4 1032.4,579.4 1032.6,571.9 1032.7,572.4 1032.8,576.8 1033.0,577.0 1033.1,584.5 1033.2,570.4 1033.3,576.3 1033.5,582.1 1033.6,580.8 1033.7,579.7 1033.9,575.2 1034.0,572.7 1034.1,581.6 1034.3,567.5 1034.4,572.2 1034.5,580.4 1034.7,576.4 1034.8,571.5 1034.9,578.3 1035.1,576.3 1035.2,578.0 1035.3,570.2 1035.5,569.3 1035.6,572.2 1035.7,576.4 1035.9,574.6 1036.0,582.8 1036.1,582.5 1036.3,570.3 1036.4,577.1 1036.5,574.6 1036.7,575.1 1036.8,571.8 1036.9,571.1 1037.0,566.1 1037.2,577.2 1037.3,579.6 1037.4,590.9 1037.6,578.5 1037.7,568.3 1037.8,579.1 1038.0,575.0 1038.1,571.5 1038.2,571.2 1038.4,582.8 1038.5,569.5 1038.6,570.0 1038.8,583.0 1038.9,574.0 1039.0,574.8 1039.2,576.9 1039.3,578.4 1039.4,575.4 1039.6,573.9 1039.7,574.3 1039.8,569.6 1040.0,571.2 1040.1,578.1 1040.2,578.9 1040.4,571.8 1040.5,578.6 1040.6,559.4 1040.7,573.4 1040.9,571.0 1041.0,573.2 1041.1,586.6 1041.3,566.1 1041.4,572.5 1041.5,578.5 1041.7,574.7 1041.8,575.0 1041.9,579.7 1042.1,587.3 1042.2,571.2 1042.3,573.9 1042.5,574.9 1042.6,578.7 1042.7,577.0 1042.9,573.4 1043.0,575.4 1043.1,570.2 1043.3,575.0 1043.4,579.3 1043.5,572.7 1043.7,578.4 1043.8,574.5 1043.9,583.9 1044.1,577.2 1044.2,572.9 1044.3,578.6 1044.4,575.7 1044.6,572.8 1044.7,575.2 1044.8,567.2 1045.0,576.8 1045.1,576.4 1045.2,565.0 1045.4,584.9 1045.5,582.8 1045.6,573.0 1045.8,592.1 1045.9,569.0 1046.0,562.0 1046.2,576.4 1046.3,577.6 1046.4,574.3 1046.6,567.9 1046.7,580.6 1046.8,573.5 1047.0,572.3 1047.1,572.9 1047.2,570.0 1047.4,570.6 1047.5,575.4 1047.6,578.2 1047.8,570.8 1047.9,575.3 1048.0,570.9 1048.2,569.0 1048.3,575.8 1048.4,579.7 1048.5,576.6 1048.7,571.6 1048.8,576.5 1048.9,569.7 1049.1,600.7 1049.2,574.7 1049.3,578.3 1049.5,580.8 1049.6,570.1 1049.7,576.9 1049.9,576.9 1050.0,565.8 1050.1,571.6 1050.3,584.6 1050.4,578.4 1050.5,571.0 1050.7,564.4 1050.8,576.4 1050.9,570.9 1051.1,558.7 1051.2,577.1 1051.3,574.0 1051.5,581.1 1051.6,583.6 1051.7,577.7 1051.9,574.2 1052.0,573.7 1052.1,574.9 1052.2,571.9 1052.4,572.3 1052.5,581.7 1052.6,577.2 1052.8,577.7 1052.9,570.9 1053.0,577.6 1053.2,571.0 1053.3,575.1 1053.4,581.7 1053.6,575.2 1053.7,575.4 1053.8,575.9 1054.0,587.3 1054.1,565.0 1054.2,577.6 1054.4,565.6 1054.5,576.3 1054.6,572.6 1054.8,579.6 1054.9,572.2 1055.0,571.9 1055.2,586.6 1055.3,576.5 1055.4,578.7 1055.6,576.6 1055.7,578.7 1055.8,570.5 1055.9,569.0 1056.1,576.7 1056.2,575.7 1056.3,581.5 1056.5,578.0 1056.6,568.0 1056.7,574.5 1056.9,575.1 1057.0,572.4 1057.1,575.2 1057.3,577.0 1057.4,570.0 1057.5,582.6 1057.7,561.0 1057.8,578.3 1057.9,578.2 1058.1,580.0 1058.2,576.4 1058.3,574.6 1058.5,575.8 1058.6,573.6 1058.7,575.5 1058.9,578.5 1059.0,578.8 1059.1,572.7 1059.3,576.6 1059.4,572.6 1059.5,574.4 1059.6,572.1 1059.8,572.4 1059.9,572.1 1060.0,578.2 1060.2,577.3 1060.3,573.3 1060.4,569.2 1060.6,573.8 1060.7,574.7 1060.8,563.7 1061.0,573.1 1061.1,577.2 1061.2,576.4 1061.4,575.8 1061.5,572.8 1061.6,577.6 1061.8,575.3 1061.9,570.4 1062.0,577.2 1062.2,573.3 1062.3,577.2 1062.4,575.9 1062.6,574.4 1062.7,573.2 1062.8,577.0 1063.0,578.5 1063.1,571.5 1063.2,575.2 1063.3,581.0 1063.5,573.2 1063.6,573.7 1063.7,576.4 1063.9,582.6 1064.0,579.7 1064.1,575.2 1064.3,563.1 1064.4,575.7 1064.5,572.2 1064.7,573.9 1064.8,575.5 1064.9,579.1 1065.1,573.8 1065.2,571.8 1065.3,577.7 1065.5,574.6 1065.6,577.0 1065.7,576.0 1065.9,576.6 1066.0,579.7 1066.1,576.9 1066.3,579.7 1066.4,571.9 1066.5,573.1 1066.7,568.4 1066.8,575.0 1066.9,575.5 1067.0,575.2 1067.2,580.5 1067.3,576.3 1067.4,576.1 1067.6,579.0 1067.7,578.1 1067.8,577.2 1068.0,575.2 1068.1,576.6 1068.2,570.9 1068.4,576.1 1068.5,576.6 1068.6,574.6 1068.8,573.1 1068.9,591.5 1069.0,573.2 1069.2,577.2 1069.3,576.1 1069.4,573.0 1069.6,575.0 1069.7,573.6 1069.8,572.0 1070.0,571.5 1070.1,581.8 1070.2,572.7 1070.4,575.2 1070.5,579.9 1070.6,579.2 1070.7,572.3 1070.9,573.9 1071.0,583.4 1071.1,576.9 1071.3,572.5 1071.4,573.0 1071.5,577.0 1071.7,573.9 1071.8,575.5 1071.9,576.2 1072.1,572.7 1072.2,572.4 1072.3,577.1 1072.5,578.3 1072.6,579.4 1072.7,579.7 1072.9,571.8 1073.0,570.2 1073.1,575.0 1073.3,572.5 1073.4,577.6 1073.5,575.8 1073.7,572.8 1073.8,574.6 1073.9,574.3 1074.1,580.6 1074.2,580.0 1074.3,576.9 1074.4,577.3 1074.6,575.8 1074.7,577.5 1074.8,576.3 1075.0,575.4 1075.1,578.6 1075.2,575.4 1075.4,577.3 1075.5,576.5 1075.6,572.6 1075.8,576.2 1075.9,578.7 1076.0,578.0 1076.2,574.6 1076.3,587.9 1076.4,571.5 1076.6,576.7 1076.7,571.0 1076.8,562.0 1077.0,583.0 1077.1,577.5 1077.2,573.8 1077.4,572.0 1077.5,575.7 1077.6,577.3 1077.8,581.0 1077.9,575.1 1078.0,576.8 1078.1,576.3 1078.3,577.8 1078.4,574.6 1078.5,576.1 1078.7,574.0 1078.8,572.2 1078.9,575.7 1079.1,574.5 1079.2,576.3 1079.3,576.1 1079.5,570.7 1079.6,572.4 1079.7,573.5 1079.9,570.3 1080.0,577.9 1080.1,575.2 1080.3,579.0 1080.4,574.7 1080.5,575.2 1080.7,573.1 1080.8,575.5 1080.9,573.3 1081.1,577.4 1081.2,573.4 1081.3,576.7 1081.5,577.2 1081.6,575.3 1081.7,574.3 1081.8,580.8 1082.0,581.2 1082.1,574.9 1082.2,575.8 1082.4,583.1 1082.5,581.9 1082.6,578.5 1082.8,574.4 1082.9,573.6 1083.0,571.9 1083.2,571.3 1083.3,568.6 1083.4,580.9 1083.6,575.8 1083.7,571.7 1083.8,580.2 1084.0,580.8 1084.1,559.9 1084.2,571.6 1084.4,571.0 1084.5,582.1 1084.6,580.1 1084.8,576.0 1084.9,577.5 1085.0,574.4 1085.2,578.3 1085.3,581.7 1085.4,575.8 1085.5,574.9 1085.7,575.3 1085.8,571.6 1085.9,579.6 1086.1,574.2 1086.2,575.3 1086.3,580.7 1086.5,571.3 1086.6,573.7 1086.7,570.6 1086.9,574.7 1087.0,573.2 1087.1,575.1 1087.3,573.5 1087.4,577.0 1087.5,569.5 1087.7,578.7 1087.8,569.5 1087.9,576.2 1088.1,572.5 1088.2,575.0 1088.3,574.0 1088.5,576.2 1088.6,575.0 1088.7,578.8 1088.9,574.7 1089.0,570.7 1089.1,584.0 1089.2,572.1 1089.4,571.7 1089.5,581.6 1089.6,576.0 1089.8,572.7 1089.9,579.5 1090.0,577.0 1090.2,576.7 1090.3,573.6 1090.4,571.7 1090.6,575.6 1090.7,575.3 1090.8,572.3 1091.0,573.7 1091.1,575.9 1091.2,571.0 1091.4,580.3 1091.5,575.0 1091.6,577.0 1091.8,577.2 1091.9,574.8 1092.0,575.4 1092.2,567.2 1092.3,573.3 1092.4,574.3 1092.6,569.9 1092.7,572.1 1092.8,581.9 1092.9,575.1 1093.1,573.0 1093.2,577.6 1093.3,572.9 1093.5,577.1 1093.6,574.3 1093.7,581.1 1093.9,582.2 1094.0,577.4 1094.1,574.8 1094.3,574.4 1094.4,576.5 1094.5,578.2 1094.7,562.0 1094.8,575.4 1094.9,569.3 1095.1,575.9 1095.2,582.4 1095.3,578.4 1095.5,568.0 1095.6,580.5 1095.7,578.3 1095.9,578.0 1096.0,576.6 1096.1,577.6 1096.3,574.1 1096.4,574.1 1096.5,575.0 1096.6,574.9 1096.8,582.5 1096.9,581.7 1097.0,573.3 1097.2,574.7 1097.3,581.0 1097.4,577.2 1097.6,574.7 1097.7,568.1 1097.8,574.6 1098.0,577.6 1098.1,571.4 1098.2,574.8 1098.4,576.8 1098.5,570.8 1098.6,579.2 1098.8,574.9 1098.9,575.3 1099.0,572.1 1099.2,580.2 1099.3,578.3 1099.4,577.2 1099.6,563.9 1099.7,575.5 1099.8,577.2 1100.0,573.9 1100.1,572.8 1100.2,574.8 1100.3,580.1 1100.5,570.9 1100.6,582.2 1100.7,570.1 1100.9,571.9 1101.0,578.4 1101.1,582.7 1101.3,567.4 1101.4,568.9 1101.5,582.5 1101.7,571.4 1101.8,578.0 1101.9,574.0 1102.1,573.7 1102.2,575.3 1102.3,560.2 1102.5,573.2 1102.6,560.3 1102.7,573.9 1102.9,574.3 1103.0,566.2 1103.1,572.4 1103.3,575.4 1103.4,571.6 1103.5,572.8 1103.7,575.8 1103.8,577.6 1103.9,553.9 1104.0,575.1 1104.2,567.8 1104.3,573.7 1104.4,580.4 1104.6,572.0 1104.7,572.2 1104.8,573.6 1105.0,567.4 1105.1,583.3 1105.2,561.5 1105.4,572.8 1105.5,592.1 1105.6,580.3 1105.8,573.0 1105.9,581.9 1106.0,580.6 1106.2,581.8 1106.3,568.2 1106.4,577.9 1106.6,575.5 1106.7,587.3 1106.8,556.6 1107.0,573.3 1107.1,584.5 1107.2,584.3 1107.4,566.9 1107.5,580.8 1107.6,582.9 1107.7,578.3 1107.9,576.1 1108.0,569.8 1108.1,573.0 1108.3,572.1 1108.4,559.6 1108.5,576.9 1108.7,570.5 1108.8,573.9 1108.9,586.6 1109.1,570.8 1109.2,579.2 1109.3,568.7 1109.5,578.4 1109.6,578.1 1109.7,577.2 1109.9,588.8 1110.0,569.3 1110.1,579.3 1110.3,576.9 1110.4,565.1 1110.5,575.1 1110.7,570.8 1110.8,573.9 1110.9,571.5 1111.1,574.2 1111.2,569.4 1111.3,576.9 1111.5,573.2 1111.6,579.7 1111.7,569.2 1111.8,587.9 1112.0,571.4 1112.1,573.8 1112.2,573.9 1112.4,575.8 1112.5,568.4 1112.6,564.1 1112.8,579.0 1112.9,586.3 1113.0,581.7 1113.2,580.2 1113.3,576.5 1113.4,576.1 1113.6,569.9 1113.7,578.1 1113.8,576.0 1114.0,575.2 1114.1,587.5 1114.2,577.5 1114.4,560.9 1114.5,576.3 1114.6,580.9 1114.8,587.4 1114.9,570.2 1115.0,577.5 1115.2,579.1 1115.3,562.9 1115.4,568.2 1115.5,584.8 1115.7,577.6 1115.8,570.6 1115.9,571.4 1116.1,581.5 1116.2,566.6 1116.3,566.3 1116.5,587.3 1116.6,584.8 1116.7,582.9 1116.9,572.4 1117.0,570.3 1117.1,574.9 1117.3,578.8 1117.4,576.3 1117.5,573.0 1117.7,573.9 1117.8,584.2 1117.9,576.2 1118.1,569.8 1118.2,583.5 1118.3,574.9 1118.5,579.1 1118.6,571.4 1118.7,584.0 1118.9,576.1 1119.0,578.6 1119.1,576.5 1119.2,580.2 1119.4,572.3 1119.5,576.2 1119.6,578.6 1119.8,573.5 1119.9,576.1 1120.0,578.2 1120.2,578.5 1120.3,572.3 1120.4,580.1 1120.6,576.9 1120.7,577.1 1120.8,574.5 1121.0,576.7 1121.1,566.8 1121.2,583.6 1121.4,573.2 1121.5,576.0 1121.6,571.9 1121.8,582.9 1121.9,570.6 1122.0,581.8 1122.2,572.9 1122.3,587.4 1122.4,575.7 1122.6,579.0 1122.7,579.3 1122.8,575.5 1122.9,579.0 1123.1,584.1 1123.2,583.4 1123.3,572.5 1123.5,572.4 1123.6,573.7 1123.7,588.3 1123.9,574.3 1124.0,573.8 1124.1,574.8 1124.3,579.1 1124.4,578.8 1124.5,580.5 1124.7,575.2 1124.8,571.4 1124.9,576.4 1125.1,570.5 1125.2,577.3 1125.3,571.9 1125.5,569.5 1125.6,583.1 1125.7,581.5 1125.9,573.9 1126.0,578.6 1126.1,573.6 1126.3,573.0 1126.4,577.8 1126.5,572.5 1126.6,568.8 1126.8,572.0 1126.9,579.2 1127.0,576.3 1127.2,577.9 1127.3,569.5 1127.4,576.5 1127.6,578.4 1127.7,575.5 1127.8,578.8 1128.0,577.2 1128.1,575.3 1128.2,575.7 1128.4,572.8 1128.5,571.8 1128.6,574.6 1128.8,577.5 1128.9,574.1 1129.0,579.2 1129.2,571.4 1129.3,574.3 1129.4,574.7 1129.6,585.3 1129.7,566.2 1129.8,577.3 1130.0,570.6 1130.1,575.1 1130.2,572.9 1130.3,569.7 1130.5,588.9 1130.6,582.0 1130.7,573.2 1130.9,575.0 1131.0,574.1 1131.1,579.5 1131.3,572.9 1131.4,580.8 1131.5,568.1 1131.7,572.2 1131.8,573.1 1131.9,584.0 1132.1,575.0 1132.2,573.4 1132.3,579.5 1132.5,568.6 1132.6,574.3 1132.7,577.3 1132.9,581.2 1133.0,575.9 1133.1,576.2 1133.3,572.7 1133.4,571.0 1133.5,575.3 1133.7,586.5 1133.8,569.4 1133.9,572.8 1134.0,576.4 1134.2,572.8 1134.3,577.6 1134.4,573.5 1134.6,565.2 1134.7,580.0 1134.8,572.8 1135.0,575.0 1135.1,572.3 1135.2,581.0 1135.4,570.7 1135.5,570.5 1135.6,576.9 1135.8,575.8 1135.9,575.2 1136.0,575.5 1136.2,571.9 1136.3,578.4 1136.4,580.3 1136.6,576.4 1136.7,567.4 1136.8,600.9 1137.0,579.7 1137.1,566.8 1137.2,574.8 1137.4,570.5 1137.5,578.6 1137.6,574.8 1137.7,574.6 1137.9,573.5 1138.0,574.9 1138.1,571.1 1138.3,572.6 1138.4,578.1 1138.5,565.3 1138.7,581.3 1138.8,581.1 1138.9,571.2 1139.1,574.7 1139.2,576.6 1139.3,569.6 1139.5,572.7 1139.6,577.3 1139.7,578.2 1139.9,579.9 1140.0,579.1 1140.1,578.9 1140.3,580.3 1140.4,574.4 1140.5,573.3 1140.7,577.9 1140.8,542.9 1140.9,574.8 1141.1,573.6 1141.2,572.8 1141.3,581.0 1141.4,561.4 1141.6,573.5 1141.7,578.4 1141.8,579.2 1142.0,575.7 1142.1,580.0 1142.2,576.1 1142.4,567.6 1142.5,577.3 1142.6,572.1 1142.8,579.7 1142.9,575.3 1143.0,576.7 1143.2,576.3 1143.3,572.7 1143.4,567.5 1143.6,576.1 1143.7,570.7 1143.8,574.3 1144.0,572.9 1144.1,577.4 1144.2,575.6 1144.4,576.4 1144.5,578.4 1144.6,575.7 1144.8,572.2 1144.9,575.6 1145.0,575.0 1145.1,569.2 1145.3,569.6 1145.4,573.9 1145.5,577.4 1145.7,573.5 1145.8,572.8 1145.9,573.7 1146.1,578.5 1146.2,581.6 1146.3,575.8 1146.5,584.0 1146.6,576.3 1146.7,574.4 1146.9,574.4 1147.0,574.1 1147.1,573.2 1147.3,582.0 1147.4,576.1 1147.5,586.8 1147.7,575.9 1147.8,571.9 1147.9,576.8 1148.1,572.8 1148.2,570.3 1148.3,576.4 1148.5,575.5 1148.6,576.5 1148.7,573.4 1148.8,562.0 1149.0,579.9 1149.1,576.4 1149.2,573.1 1149.4,573.9 1149.5,577.9 1149.6,574.7 1149.8,575.3 1149.9,577.3 1150.0,574.1 1150.2,572.0 1150.3,575.8 1150.4,579.7 1150.6,568.5 1150.7,575.3 1150.8,563.1 1151.0,578.2 1151.1,574.9 1151.2,578.7 1151.4,575.4 1151.5,579.0 1151.6,576.8 1151.8,579.5 1151.9,578.1 1152.0,579.6 1152.2,580.5 1152.3,572.5 1152.4,572.6 1152.5,574.4 1152.7,576.5 1152.8,571.9 1152.9,576.3 1153.1,574.5 1153.2,572.8 1153.3,575.0 1153.5,572.0 1153.6,575.9 1153.7,572.7 1153.9,575.2 1154.0,578.3 1154.1,578.1 1154.3,573.7 1154.4,576.4 1154.5,572.8 1154.7,573.6 1154.8,572.7 1154.9,573.7 1155.1,574.1 1155.2,571.4 1155.3,575.7 1155.5,575.8 1155.6,572.8 1155.7,577.1 1155.9,577.2 1156.0,569.8 1156.1,576.7 1156.2,578.6 1156.4,572.8 1156.5,571.0 1156.6,579.2 1156.8,578.5 1156.9,573.4 1157.0,574.1 1157.2,575.0 1157.3,575.3 1157.4,576.6 1157.6,577.9 1157.7,577.4 1157.8,574.0 1158.0,572.8 1158.1,565.5 1158.2,578.3 1158.4,581.4 1158.5,574.2 1158.6,576.0 1158.8,582.6 1158.9,571.9 1159.0,580.1 1159.2,575.7 1159.3,576.8 1159.4,564.1 1159.6,574.9 1159.7,575.2 1159.8,575.5 1159.9,573.9 1160.1,578.3 1160.2,568.7 1160.3,575.1 1160.5,577.0 1160.6,577.2 1160.7,574.4 1160.9,578.7 1161.0,572.2 1161.1,572.6 1161.3,576.0 1161.4,573.2 1161.5,585.3 1161.7,574.4 1161.8,579.5 1161.9,579.1 1162.1,579.1 1162.2,575.3 1162.3,576.3 1162.5,575.8 1162.6,579.1 1162.7,575.9 1162.9,581.9 1163.0,579.4 1163.1,578.1 1163.3,573.6 1163.4,577.6 1163.5,578.7 1163.6,574.6 1163.8,575.9 1163.9,572.4 1164.0,574.5 1164.2,574.9 1164.3,576.3 1164.4,573.3 1164.6,578.2 1164.7,581.1 1164.8,572.4 1165.0,577.4 1165.1,575.5 1165.2,573.4 1165.4,571.9 1165.5,586.4 1165.6,592.5 1165.8,571.1 1165.9,582.1 1166.0,573.9 1166.2,577.1 1166.3,579.1 1166.4,576.2 1166.6,582.2 1166.7,574.1 1166.8,571.1 1167.0,581.3 1167.1,579.4 1167.2,571.0 1167.3,574.2 1167.5,577.0 1167.6,570.0 1167.7,582.5 1167.9,576.8 1168.0,575.3 1168.1,577.0 1168.3,572.5 1168.4,582.6 1168.5,575.5 1168.7,579.0 1168.8,570.8 1168.9,571.4 1169.1,578.8 1169.2,580.3 1169.3,575.9 1169.5,579.3 1169.6,578.1 1169.7,573.9 1169.9,577.7 1170.0,568.1 1170.1,575.4 1170.3,578.0 1170.4,580.5 1170.5,578.0 1170.7,590.2 1170.8,573.4 1170.9,569.6 1171.0,570.1 1171.2,573.4 1171.3,578.7 1171.4,576.4 1171.6,575.4 1171.7,582.9 1171.8,574.3 1172.0,580.2 1172.1,576.1 1172.2,578.0 1172.4,573.2 1172.5,564.4 1172.6,580.9 1172.8,575.8 1172.9,566.9 1173.0,570.7 1173.2,576.7 1173.3,574.7 1173.4,574.4 1173.6,582.7 1173.7,574.4 1173.8,571.9 1174.0,564.7 1174.1,576.0 1174.2,578.2 1174.4,580.9 1174.5,586.9 1174.6,574.3 1174.7,569.0 1174.9,575.8 1175.0,575.8 1175.1,576.7 1175.3,561.5 1175.4,581.0 1175.5,569.1 1175.7,577.6 1175.8,577.6 1175.9,568.6 1176.1,575.6 1176.2,577.4 1176.3,568.7 1176.5,574.9 1176.6,571.7 1176.7,578.0 1176.9,583.0 1177.0,574.9 1177.1,580.3 1177.3,577.5 1177.4,574.1 1177.5,572.6 1177.7,574.5 1177.8,575.3 1177.9,588.8 1178.1,574.7 1178.2,577.8 1178.3,571.2 1178.5,572.3 1178.6,574.0 1178.7,572.6 1178.8,586.4 1179.0,574.5 1179.1,575.4 1179.2,583.7 1179.4,567.1 1179.5,574.1 1179.6,577.3 1179.8,577.1 1179.9,564.1 1180.0,575.6 1180.2,582.0 1180.3,577.1 1180.4,573.7 1180.6,574.0 1180.7,572.0 1180.8,579.8 1181.0,578.1 1181.1,575.2 1181.2,578.0 1181.4,574.6 1181.5,578.8 1181.6,573.1 1181.8,575.2 1181.9,573.1 1182.0,579.2 1182.2,578.6 1182.3,572.2 1182.4,580.9 1182.5,568.9 1182.7,581.4 1182.8,577.6" fill="none" stroke="#0000ff" stroke-width="1.67" stroke-linejoin="round" clip-path="url(#c3)"/>
<rect x="1108.7" y="519.7" width="73.2" height="16.8" rx="2.2" ry="2.2" fill="#fff" fill-opacity="0.8" stroke="#ccc" stroke-opacity="0.8" stroke-width="1.1"/>
<line x1="1112.30" y1="528.00" x2="1132.90" y2="528.00" stroke="#0000ff" stroke-width="1.67" stroke-linecap="square"/>
<text x="1136.80" y="531.30" font-size="10.73" textLength="41.40" lengthAdjust="spacingAndGlyphs">y=1024</text>
<rect x="911.00" y="517.00" width="274.00" height="120.00" fill="none" stroke="#000" stroke-width="1.67" stroke-linejoin="miter"/>
<line x1="912.40" y1="637.00" x2="912.40" y2="643.94" stroke="#000" stroke-width="1.67" stroke-linecap="butt"/>
<text x="909.49" y="660.00" font-size="10.73" textLength="6.63" lengthAdjust="spacingAndGlyphs">0</text>
<line x1="978.50" y1="637.00" x2="978.50" y2="643.94" stroke="#000" stroke-width="1.67" stroke-linecap="butt"/>
<text x="968.96" y="660.00" font-size="10.73" textLength="19.88" lengthAdjust="spacingAndGlyphs">500</text>
<line x1="1044.60" y1="637.00" x2="1044.60" y2="643.94" stroke="#000" stroke-width="1.67" stroke-linecap="butt"/>
<text x="1031.75" y="660.00" font-size="10.73" textLength="26.51" lengthAdjust="spacingAndGlyphs">1000</text>
<line x1="1110.70" y1="637.00" x2="1110.70" y2="643.94" stroke="#000" stroke-width="1.67" stroke-linecap="butt"/>
<text x="1097.85" y="660.00" font-size="10.73" textLength="26.51" lengthAdjust="spacingAndGlyphs">1500</text>
<line x1="1176.80" y1="637.00" x2="1176.80" y2="643.94" stroke="#000" stroke-width="1.67" stroke-linecap="butt"/>
<text x="1163.95" y="660.00" font-size="10.73" textLength="26.51" lengthAdjust="spacingAndGlyphs">2000</text>
<line x1="911.00" y1="523.26" x2="904.06" y2="523.26" stroke="#000" stroke-width="1.67" stroke-linecap="butt"/>
<text x="875.82" y="527.00" font-size="10.73" textLength="19.88" lengthAdjust="spacingAndGlyphs">100</text>
<line x1="911.00" y1="549.53" x2="904.06" y2="549.53" stroke="#000" stroke-width="1.67" stroke-linecap="butt"/>
<text x="882.45" y="554.00" font-size="10.73" textLength="13.25" lengthAdjust="spacingAndGlyphs">50</text>
<line x1="911.00" y1="575.80" x2="904.06" y2="575.80" stroke="#000" stroke-width="1.67" stroke-linecap="butt"/>
<text x="889.07" y="580.00" font-size="10.73" textLength="6.63" lengthAdjust="spacingAndGlyphs">0</text>
<line x1="911.00" y1="602.07" x2="904.06" y2="602.07" stroke="#000" stroke-width="1.67" stroke-linecap="butt"/>
<text x="873.72" y="606.00" font-size="10.73" textLength="21.98" lengthAdjust="spacingAndGlyphs">−50</text>
<line x1="911.00" y1="628.34" x2="904.06" y2="628.34" stroke="#000" stroke-width="1.67" stroke-linecap="butt"/>
<text x="867.09" y="633.00" font-size="10.73" textLength="28.61" lengthAdjust="spacingAndGlyphs">−100</text>
<text x="1044.43" y="678.00" font-size="10.73" textLength="7.14" lengthAdjust="spacingAndGlyphs">X</text>
<text transform="translate(857.30,577.60) rotate(-90)" x="-17.41" y="0" font-size="10.73" textLength="34.82" lengthAdjust="spacingAndGlyphs">counts</text>
<text transform="translate(1193.90,575.40) rotate(90)" x="-19.35" y="0" font-size="10.73" textLength="38.70" lengthAdjust="spacingAndGlyphs">cut in x</text>
<clipPath id="c4"><rect x="911.0" y="689.0" width="274.0" height="120.0"/></clipPath>
<polyline points="912.3,756.3 912.4,754.3 912.6,754.4 912.7,749.6 912.8,758.9 913.0,749.7 913.1,752.4 913.2,743.7 913.4,736.3 913.5,741.4 913.6,744.3 913.8,748.1 913.9,763.7 914.0,741.0 914.2,748.9 914.3,745.1 914.4,748.1 914.5,741.4 914.7,770.0 914.8,749.3 914.9,737.4 915.1,746.7 915.2,755.2 915.3,746.3 915.5,767.9 915.6,749.0 915.7,748.6 915.9,746.9 916.0,755.8 916.1,778.1 916.3,751.6 916.4,757.6 916.5,752.7 916.7,741.6 916.8,750.1 916.9,771.5 917.1,741.2 917.2,751.6 917.3,758.4 917.5,753.2 917.6,742.8 917.7,751.4 917.9,765.2 918.0,753.6 918.1,747.9 918.2,748.0 918.4,744.2 918.5,743.7 918.6,751.8 918.8,748.6 918.9,766.8 919.0,747.6 919.2,752.7 919.3,752.9 919.4,739.0 919.6,747.8 919.7,745.2 919.8,737.3 920.0,763.7 920.1,748.4 920.2,747.7 920.4,751.0 920.5,743.3 920.6,749.3 920.8,740.5 920.9,749.3 921.0,749.4 921.2,749.7 921.3,745.3 921.4,747.1 921.6,742.2 921.7,756.4 921.8,752.4 921.9,750.9 922.1,748.9 922.2,745.7 922.3,741.3 922.5,745.6 922.6,750.6 922.7,756.6 922.9,737.8 923.0,746.1 923.1,742.6 923.3,749.9 923.4,740.2 923.5,745.7 923.7,747.7 923.8,751.7 923.9,746.3 924.1,739.5 924.2,748.9 924.3,754.9 924.5,750.0 924.6,747.2 924.7,753.3 924.9,747.6 925.0,745.0 925.1,749.2 925.3,750.6 925.4,750.6 925.5,732.1 925.6,754.6 925.8,749.2 925.9,749.7 926.0,747.3 926.2,748.2 926.3,752.8 926.4,738.9 926.6,747.1 926.7,753.8 926.8,751.8 927.0,747.5 927.1,745.2 927.2,753.9 927.4,744.7 927.5,754.0 927.6,751.4 927.8,744.1 927.9,740.3 928.0,748.3 928.2,744.8 928.3,742.2 928.4,752.7 928.6,746.6 928.7,746.8 928.8,743.3 929.0,746.6 929.1,749.1 929.2,729.5 929.3,815.0 929.5,744.2 929.6,750.9 929.7,752.0 929.9,749.6 930.0,747.7 930.1,744.7 930.3,748.9 930.4,744.6 930.5,743.5 930.7,748.4 930.8,731.0 930.9,743.7 931.1,746.7 931.2,732.1 931.3,717.9 931.5,732.7 931.6,754.1 931.7,751.0 931.9,739.1 932.0,746.1 932.1,746.8 932.3,747.1 932.4,741.4 932.5,749.5 932.7,749.2 932.8,738.9 932.9,753.7 933.0,744.7 933.2,753.7 933.3,746.9 933.4,734.2 933.6,746.7 933.7,751.3 933.8,737.5 934.0,750.3 934.1,748.8 934.2,746.6 934.4,753.7 934.5,743.1 934.6,741.0 934.8,750.9 934.9,746.5 935.0,750.8 935.2,744.2 935.3,761.2 935.4,748.4 935.6,746.8 935.7,756.1 935.8,746.1 936.0,755.7 936.1,748.0 936.2,747.5 936.4,745.6 936.5,746.0 936.6,736.2 936.7,748.4 936.9,748.6 937.0,747.7 937.1,750.2 937.3,744.1 937.4,742.8 937.5,742.0 937.7,740.6 937.8,742.2 937.9,749.7 938.1,750.2 938.2,766.3 938.3,745.8 938.5,748.4 938.6,744.2 938.7,741.8 938.9,749.5 939.0,744.4 939.1,755.2 939.3,752.4 939.4,752.4 939.5,749.0 939.7,754.5 939.8,746.2 939.9,738.4 940.1,684.8 940.2,683.0 940.3,742.7 940.4,746.7 940.6,747.2 940.7,748.8 940.8,744.6 941.0,746.8 941.1,751.4 941.2,755.7 941.4,756.4 941.5,745.8 941.6,748.7 941.8,743.4 941.9,746.3 942.0,751.8 942.2,747.0 942.3,750.2 942.4,750.6 942.6,749.4 942.7,742.7 942.8,753.0 943.0,751.1 943.1,744.9 943.2,747.3 943.4,751.2 943.5,746.4 943.6,746.6 943.8,744.5 943.9,745.6 944.0,746.8 944.1,743.8 944.3,747.1 944.4,750.2 944.5,742.4 944.7,751.2 944.8,748.3 944.9,748.1 945.1,744.1 945.2,749.9 945.3,735.3 945.5,752.5 945.6,747.0 945.7,746.8 945.9,746.2 946.0,750.3 946.1,751.1 946.3,750.1 946.4,749.1 946.5,748.1 946.7,744.7 946.8,749.0 946.9,747.5 947.1,750.0 947.2,747.1 947.3,749.6 947.5,748.3 947.6,746.0 947.7,750.6 947.8,748.1 948.0,750.2 948.1,747.1 948.2,749.3 948.4,748.7 948.5,748.5 948.6,745.3 948.8,743.3 948.9,745.3 949.0,769.4 949.2,748.5 949.3,744.0 949.4,752.0 949.6,742.5 949.7,748.4 949.8,743.5 950.0,749.5 950.1,746.0 950.2,744.1 950.4,748.5 950.5,748.4 950.6,751.9 950.8,749.3 950.9,750.6 951.0,745.9 951.2,749.3 951.3,744.7 951.4,746.6 951.5,744.8 951.7,747.3 951.8,747.9 951.9,763.7 952.1,781.0 952.2,747.3 952.3,751.3 952.5,749.3 952.6,745.9 952.7,752.1 952.9,749.7 953.0,749.9 953.1,752.1 953.3,752.3 953.4,751.2 953.5,749.3 953.7,756.6 953.8,750.6 953.9,744.1 954.1,750.8 954.2,750.4 954.3,752.5 954.5,751.4 954.6,747.7 954.7,749.8 954.9,738.4 955.0,750.4 955.1,746.7 955.2,752.6 955.4,748.8 955.5,749.7 955.6,748.3 955.8,743.9 955.9,761.6 956.0,751.8 956.2,747.6 956.3,751.1 956.4,748.4 956.6,742.9 956.7,744.9 956.8,744.4 957.0,746.2 957.1,748.0 957.2,753.0 957.4,749.5 957.5,749.7 957.6,745.6 957.8,744.5 957.9,746.3 958.0,750.6 958.2,741.5 958.3,743.0 958.4,748.7 958.6,759.5 958.7,745.6 958.8,747.5 958.9,748.3 959.1,748.5 959.2,747.9 959.3,737.6 959.5,753.7 959.6,753.8 959.7,741.5 959.9,753.5 960.0,746.1 960.1,746.7 960.3,747.1 960.4,750.5 960.5,744.1 960.7,746.6 960.8,749.2 960.9,753.2 961.1,748.8 961.2,750.2 961.3,752.7 961.5,746.4 961.6,745.7 961.7,744.7 961.9,747.4 962.0,748.8 962.1,743.4 962.3,744.8 962.4,738.8 962.5,745.0 962.6,751.5 962.8,744.0 962.9,738.6 963.0,746.7 963.2,748.5 963.3,750.2 963.4,740.2 963.6,748.5 963.7,748.7 963.8,746.5 964.0,753.5 964.1,748.8 964.2,752.8 964.4,748.3 964.5,745.7 964.6,744.0 964.8,749.4 964.9,762.6 965.0,749.3 965.2,754.4 965.3,745.4 965.4,748.5 965.6,747.2 965.7,750.7 965.8,746.8 966.0,746.6 966.1,746.6 966.2,743.4 966.3,749.1 966.5,732.4 966.6,744.7 966.7,738.7 966.9,757.6 967.0,755.5 967.1,741.5 967.3,746.0 967.4,743.8 967.5,753.9 967.7,748.0 967.8,734.9 967.9,750.7 968.1,742.2 968.2,751.9 968.3,746.8 968.5,748.5 968.6,746.0 968.7,742.5 968.9,751.8 969.0,745.6 969.1,746.9 969.3,759.9 969.4,745.4 969.5,749.3 969.7,745.4 969.8,742.1 969.9,744.1 970.0,746.7 970.2,745.7 970.3,753.3 970.4,749.4 970.6,748.3 970.7,749.4 970.8,750.0 971.0,747.5 971.1,745.8 971.2,739.9 971.4,741.9 971.5,750.8 971.6,743.5 971.8,746.7 971.9,750.7 972.0,741.5 972.2,748.1 972.3,748.6 972.4,749.7 972.6,750.8 972.7,747.0 972.8,751.0 973.0,738.1 973.1,759.5 973.2,748.3 973.4,745.2 973.5,746.5 973.6,743.7 973.7,746.5 973.9,751.7 974.0,748.3 974.1,750.7 974.3,742.1 974.4,744.9 974.5,746.7 974.7,746.4 974.8,749.6 974.9,748.0 975.1,743.9 975.2,747.7 975.3,745.3 975.5,746.7 975.6,746.6 975.7,746.3 975.9,743.6 976.0,748.6 976.1,744.9 976.3,750.4 976.4,749.7 976.5,750.2 976.7,744.2 976.8,745.3 976.9,742.8 977.1,751.3 977.2,746.0 977.3,751.8 977.4,743.2 977.6,750.1 977.7,745.7 977.8,750.1 978.0,750.4 978.1,746.5 978.2,754.0 978.4,752.0 978.5,741.6 978.6,750.6 978.8,744.2 978.9,750.8 979.0,753.9 979.2,749.0 979.3,744.0 979.4,740.4 979.6,742.6 979.7,744.0 979.8,750.5 980.0,747.3 980.1,740.4 980.2,751.6 980.4,743.7 980.5,742.8 980.6,748.4 980.8,747.0 980.9,748.6 981.0,752.1 981.2,744.1 981.3,751.7 981.4,745.2 981.5,754.8 981.7,742.8 981.8,744.9 981.9,746.5 982.1,739.5 982.2,747.8 982.3,746.8 982.5,747.0 982.6,750.5 982.7,741.6 982.9,740.8 983.0,744.4 983.1,752.0 983.3,745.4 983.4,747.2 983.5,749.5 983.7,737.2 983.8,742.2 983.9,741.9 984.1,738.3 984.2,745.3 984.3,739.2 984.5,738.3 984.6,746.4 984.7,751.0 984.9,744.0 985.0,746.7 985.1,744.1 985.2,723.2 985.4,752.3 985.5,744.9 985.6,748.9 985.8,746.9 985.9,745.3 986.0,746.9 986.2,757.1 986.3,744.5 986.4,749.9 986.6,748.5 986.7,745.3 986.8,754.9 987.0,748.8 987.1,756.9 987.2,750.4 987.4,745.8 987.5,748.3 987.6,749.1 987.8,744.6 987.9,749.8 988.0,756.1 988.2,742.1 988.3,746.7 988.4,743.6 988.6,750.0 988.7,750.2 988.8,751.9 988.9,758.2 989.1,750.5 989.2,751.2 989.3,739.4 989.5,758.3 989.6,747.9 989.7,749.1 989.9,742.8 990.0,749.0 990.1,747.0 990.3,743.5 990.4,757.3 990.5,743.7 990.7,749.8 990.8,753.8 990.9,758.6 991.1,758.5 991.2,748.8 991.3,754.6 991.5,754.3 991.6,751.2 991.7,748.3 991.9,751.1 992.0,754.8 992.1,751.9 992.3,749.4 992.4,754.3 992.5,743.3 992.6,741.3 992.8,741.2 992.9,758.7 993.0,750.2 993.2,753.4 993.3,740.6 993.4,750.9 993.6,736.2 993.7,759.6 993.8,747.0 994.0,745.4 994.1,752.4 994.2,758.4 994.4,737.2 994.5,748.4 994.6,743.6 994.8,750.6 994.9,755.0 995.0,753.9 995.2,743.5 995.3,746.4 995.4,755.9 995.6,746.4 995.7,744.8 995.8,745.4 996.0,741.9 996.1,755.9 996.2,753.1 996.3,753.7 996.5,747.2 996.6,741.0 996.7,750.3 996.9,746.1 997.0,743.3 997.1,750.3 997.3,743.7 997.4,748.5 997.5,738.7 997.7,740.6 997.8,751.2 997.9,750.6 998.1,738.4 998.2,752.3 998.3,741.9 998.5,749.9 998.6,753.6 998.7,739.1 998.9,745.6 999.0,752.9 999.1,748.9 999.3,743.3 999.4,752.5 999.5,748.3 999.7,742.4 999.8,754.6 999.9,745.4 1000.0,754.8 1000.2,748.1 1000.3,754.7 1000.4,754.2 1000.6,751.1 1000.7,743.2 1000.8,744.0 1001.0,748.6 1001.1,749.4 1001.2,747.4 1001.4,735.0 1001.5,746.3 1001.6,758.4 1001.8,736.7 1001.9,749.3 1002.0,742.5 1002.2,745.4 1002.3,691.7 1002.4,738.6 1002.6,746.0 1002.7,739.3 1002.8,736.2 1003.0,754.7 1003.1,753.3 1003.2,743.1 1003.4,747.9 1003.5,744.2 1003.6,742.7 1003.7,740.2 1003.9,745.1 1004.0,750.6 1004.1,754.9 1004.3,747.4 1004.4,755.2 1004.5,747.7 1004.7,751.2 1004.8,746.4 1004.9,745.1 1005.1,748.1 1005.2,753.5 1005.3,747.3 1005.5,750.8 1005.6,746.7 1005.7,749.7 1005.9,738.7 1006.0,750.1 1006.1,755.5 1006.3,751.5 1006.4,747.6 1006.5,737.1 1006.7,742.5 1006.8,750.2 1006.9,747.1 1007.1,752.6 1007.2,753.5 1007.3,746.7 1007.4,746.4 1007.6,750.8 1007.7,750.7 1007.8,746.3 1008.0,745.4 1008.1,751.0 1008.2,746.5 1008.4,744.6 1008.5,750.7 1008.6,754.8 1008.8,748.7 1008.9,747.2 1009.0,744.4 1009.2,749.6 1009.3,746.9 1009.4,752.7 1009.6,746.2 1009.7,753.7 1009.8,745.7 1010.0,747.3 1010.1,753.6 1010.2,748.9 1010.4,741.8 1010.5,751.9 1010.6,752.8 1010.8,749.0 1010.9,747.3 1011.0,744.9 1011.1,748.5 1011.3,749.7 1011.4,748.8 1011.5,745.1 1011.7,748.6 1011.8,745.9 1011.9,747.4 1012.1,749.3 1012.2,748.3 1012.3,744.1 1012.5,746.2 1012.6,747.1 1012.7,732.1 1012.9,747.3 1013.0,736.1 1013.1,751.4 1013.3,747.5 1013.4,741.0 1013.5,745.0 1013.7,746.7 1013.8,744.1 1013.9,749.7 1014.1,747.4 1014.2,747.2 1014.3,744.9 1014.5,746.6 1014.6,739.9 1014.7,748.0 1014.8,746.8 1015.0,754.4 1015.1,745.4 1015.2,755.5 1015.4,745.3 1015.5,744.1 1015.6,746.3 1015.8,752.0 1015.9,749.0 1016.0,758.3 1016.2,750.7 1016.3,763.8 1016.4,747.9 1016.6,749.4 1016.7,742.8 1016.8,751.9 1017.0,740.6 1017.1,747.2 1017.2,753.1 1017.4,748.7 1017.5,755.8 1017.6,759.0 1017.8,749.4 1017.9,744.3 1018.0,733.2 1018.2,746.5 1018.3,755.0 1018.4,748.1 1018.5,747.9 1018.7,748.0 1018.8,753.8 1018.9,745.8 1019.1,745.2 1019.2,752.6 1019.3,738.8 1019.5,749.4 1019.6,747.2 1019.7,750.1 1019.9,753.4 1020.0,751.6 1020.1,750.8 1020.3,749.3 1020.4,741.4 1020.5,746.0 1020.7,753.4 1020.8,747.3 1020.9,752.1 1021.1,750.5 1021.2,758.6 1021.3,747.1 1021.5,746.9 1021.6,748.6 1021.7,750.6 1021.9,747.0 1022.0,742.1 1022.1,744.4 1022.2,750.7 1022.4,746.9 1022.5,748.9 1022.6,745.8 1022.8,751.0 1022.9,748.1 1023.0,744.4 1023.2,751.8 1023.3,746.5 1023.4,741.5 1023.6,754.4 1023.7,747.6 1023.8,745.4 1024.0,737.5 1024.1,757.7 1024.2,739.7 1024.4,724.3 1024.5,749.1 1024.6,744.2 1024.8,747.6 1024.9,745.6 1025.0,749.1 1025.2,749.3 1025.3,747.2 1025.4,751.3 1025.6,752.7 1025.7,749.1 1025.8,757.2 1025.9,748.5 1026.1,746.3 1026.2,745.6 1026.3,746.7 1026.5,750.2 1026.6,743.5 1026.7,751.0 1026.9,750.3 1027.0,748.9 1027.1,744.8 1027.3,748.3 1027.4,751.3 1027.5,752.5 1027.7,748.5 1027.8,748.9 1027.9,751.6 1028.1,753.6 1028.2,749.3 1028.3,746.9 1028.5,747.4 1028.6,752.8 1028.7,738.5 1028.9,748.8 1029.0,747.6 1029.1,751.8 1029.3,750.2 1029.4,745.3 1029.5,750.2 1029.6,743.2 1029.8,745.0 1029.9,746.9 1030.0,747.3 1030.2,743.8 1030.3,749.1 1030.4,746.7 1030.6,764.7 1030.7,743.5 1030.8,748.8 1031.0,748.7 1031.1,755.5 1031.2,747.2 1031.4,749.0 1031.5,746.3 1031.6,752.0 1031.8,750.4 1031.9,766.8 1032.0,750.0 1032.2,747.4 1032.3,745.5 1032.4,747.7 1032.6,747.8 1032.7,744.7 1032.8,749.0 1033.0,746.4 1033.1,750.4 1033.2,763.7 1033.3,747.8 1033.5,744.5 1033.6,746.5 1033.7,749.7 1033.9,748.4 1034.0,749.1 1034.1,746.6 1034.3,750.4 1034.4,745.4 1034.5,767.9 1034.7,744.8 1034.8,750.5 1034.9,745.7 1035.1,750.4 1035.2,746.4 1035.3,748.5 1035.5,750.7 1035.6,745.0 1035.7,744.3 1035.9,743.5 1036.0,746.8 1036.1,769.4 1036.3,744.3 1036.4,750.2 1036.5,747.6 1036.7,751.5 1036.8,747.5 1036.9,743.9 1037.0,748.9 1037.2,745.3 1037.3,748.2 1037.4,746.7 1037.6,746.6 1037.7,748.2 1037.8,754.2 1038.0,749.5 1038.1,747.5 1038.2,750.4 1038.4,747.8 1038.5,751.6 1038.6,746.3 1038.8,747.1 1038.9,746.9 1039.0,749.1 1039.2,747.2 1039.3,751.1 1039.4,749.9 1039.6,746.8 1039.7,749.7 1039.8,748.6 1040.0,748.0 1040.1,745.2 1040.2,749.7 1040.4,749.5 1040.5,749.8 1040.6,752.4 1040.7,747.5 1040.9,753.6 1041.0,750.2 1041.1,744.4 1041.3,748.0 1041.4,754.3 1041.5,750.8 1041.7,743.3 1041.8,748.8 1041.9,742.7 1042.1,749.6 1042.2,755.1 1042.3,747.3 1042.5,748.7 1042.6,747.2 1042.7,751.2 1042.9,751.3 1043.0,749.9 1043.1,751.3 1043.3,745.4 1043.4,745.0 1043.5,748.7 1043.7,745.1 1043.8,750.3 1043.9,749.1 1044.1,753.5 1044.2,744.0 1044.3,749.8 1044.4,743.9 1044.6,743.9 1044.7,746.3 1044.8,754.8 1045.0,751.5 1045.1,745.0 1045.2,745.8 1045.4,744.1 1045.5,746.7 1045.6,752.2 1045.8,751.9 1045.9,744.6 1046.0,719.3 1046.2,750.5 1046.3,748.2 1046.4,746.7 1046.6,747.1 1046.7,746.8 1046.8,748.9 1047.0,747.2 1047.1,750.1 1047.2,748.4 1047.4,745.4 1047.5,747.8 1047.6,750.4 1047.8,746.8 1047.9,752.3 1048.0,743.8 1048.2,752.2 1048.3,746.9 1048.4,745.4 1048.5,749.5 1048.7,751.6 1048.8,746.1 1048.9,747.0 1049.1,754.5 1049.2,744.0 1049.3,744.2 1049.5,749.1 1049.6,748.4 1049.7,748.5 1049.9,750.1 1050.0,746.3 1050.1,751.2 1050.3,749.4 1050.4,747.5 1050.5,755.4 1050.7,750.4 1050.8,751.8 1050.9,750.2 1051.1,750.5 1051.2,749.2 1051.3,747.7 1051.5,753.5 1051.6,747.1 1051.7,756.0 1051.9,744.3 1052.0,757.1 1052.1,745.2 1052.2,757.1 1052.4,742.4 1052.5,749.9 1052.6,747.0 1052.8,748.1 1052.9,748.9 1053.0,750.7 1053.2,757.6 1053.3,742.9 1053.4,740.0 1053.6,751.2 1053.7,742.3 1053.8,744.1 1054.0,765.8 1054.1,749.0 1054.2,745.6 1054.4,751.3 1054.5,749.8 1054.6,750.7 1054.8,751.7 1054.9,750.8 1055.0,745.5 1055.2,745.2 1055.3,752.0 1055.4,748.6 1055.6,749.1 1055.7,756.2 1055.8,743.1 1055.9,753.2 1056.1,743.0 1056.2,758.8 1056.3,751.7 1056.5,744.7 1056.6,746.2 1056.7,745.8 1056.9,748.3 1057.0,738.8 1057.1,747.8 1057.3,746.6 1057.4,751.4 1057.5,749.5 1057.7,741.8 1057.8,741.8 1057.9,756.2 1058.1,750.5 1058.2,742.4 1058.3,745.2 1058.5,743.6 1058.6,756.1 1058.7,747.1 1058.9,747.9 1059.0,747.6 1059.1,750.8 1059.3,748.1 1059.4,740.0 1059.5,752.7 1059.6,748.2 1059.8,749.3 1059.9,749.1 1060.0,739.9 1060.2,755.1 1060.3,749.5 1060.4,745.5 1060.6,751.5 1060.7,746.5 1060.8,749.5 1061.0,741.4 1061.1,743.8 1061.2,752.5 1061.4,746.1 1061.5,752.7 1061.6,738.7 1061.8,752.1 1061.9,754.0 1062.0,746.8 1062.2,750.0 1062.3,745.2 1062.4,751.1 1062.6,740.7 1062.7,747.8 1062.8,750.8 1063.0,741.7 1063.1,747.1 1063.2,746.5 1063.3,745.1 1063.5,751.0 1063.6,750.1 1063.7,744.9 1063.9,751.2 1064.0,750.3 1064.1,743.9 1064.3,733.2 1064.4,746.4 1064.5,752.7 1064.7,749.9 1064.8,748.5 1064.9,749.2 1065.1,748.6 1065.2,751.4 1065.3,749.0 1065.5,739.4 1065.6,754.3 1065.7,746.4 1065.9,751.9 1066.0,751.9 1066.1,742.1 1066.3,739.8 1066.4,749.6 1066.5,744.4 1066.7,751.3 1066.8,749.5 1066.9,751.2 1067.0,747.5 1067.2,739.3 1067.3,747.5 1067.4,749.6 1067.6,748.1 1067.7,747.8 1067.8,752.1 1068.0,749.8 1068.1,753.2 1068.2,753.3 1068.4,745.0 1068.5,749.8 1068.6,749.5 1068.8,750.7 1068.9,750.3 1069.0,747.7 1069.2,755.8 1069.3,754.8 1069.4,736.6 1069.6,744.4 1069.7,751.5 1069.8,744.8 1070.0,744.2 1070.1,747.9 1070.2,748.0 1070.4,734.0 1070.5,747.8 1070.6,753.5 1070.7,753.1 1070.9,747.9 1071.0,745.8 1071.1,741.3 1071.3,748.7 1071.4,748.0 1071.5,745.0 1071.7,732.7 1071.8,744.8 1071.9,752.5 1072.1,746.3 1072.2,744.9 1072.3,755.2 1072.5,743.4 1072.6,748.4 1072.7,751.3 1072.9,740.2 1073.0,754.8 1073.1,756.1 1073.3,747.9 1073.4,761.1 1073.5,749.9 1073.7,746.0 1073.8,760.4 1073.9,743.9 1074.1,747.9 1074.2,754.1 1074.3,754.7 1074.4,746.4 1074.6,746.7 1074.7,752.0 1074.8,734.8 1075.0,748.5 1075.1,747.9 1075.2,755.9 1075.4,743.4 1075.5,739.3 1075.6,748.3 1075.8,745.7 1075.9,762.8 1076.0,753.0 1076.2,757.0 1076.3,743.1 1076.4,757.5 1076.6,743.0 1076.7,752.2 1076.8,762.9 1077.0,753.3 1077.1,746.8 1077.2,747.4 1077.4,744.2 1077.5,750.5 1077.6,746.0 1077.8,739.9 1077.9,755.6 1078.0,742.8 1078.1,754.0 1078.3,743.0 1078.4,750.3 1078.5,740.4 1078.7,749.6 1078.8,750.9 1078.9,742.5 1079.1,749.5 1079.2,749.3 1079.3,742.9 1079.5,740.3 1079.6,743.4 1079.7,758.4 1079.9,746.2 1080.0,746.4 1080.1,743.2 1080.3,742.1 1080.4,742.3 1080.5,745.2 1080.7,736.7 1080.8,748.5 1080.9,751.3 1081.1,754.5 1081.2,749.7 1081.3,743.3 1081.5,747.4 1081.6,739.9 1081.7,747.6 1081.8,750.4 1082.0,739.2 1082.1,748.1 1082.2,741.2 1082.4,759.6 1082.5,762.0 1082.6,750.3 1082.8,753.0 1082.9,750.9 1083.0,750.9 1083.2,746.2 1083.3,752.2 1083.4,752.1 1083.6,750.9 1083.7,741.6 1083.8,749.1 1084.0,742.8 1084.1,751.9 1084.2,755.1 1084.4,747.1 1084.5,742.7 1084.6,756.5 1084.8,750.6 1084.9,744.6 1085.0,749.3 1085.2,749.5 1085.3,744.0 1085.4,743.2 1085.5,747.1 1085.7,750.5 1085.8,749.7 1085.9,750.5 1086.1,740.9 1086.2,763.4 1086.3,747.4 1086.5,722.7 1086.6,752.7 1086.7,745.1 1086.9,751.5 1087.0,744.6 1087.1,740.0 1087.3,748.3 1087.4,737.4 1087.5,748.1 1087.7,759.5 1087.8,749.9 1087.9,747.4 1088.1,747.0 1088.2,748.1 1088.3,746.3 1088.5,748.9 1088.6,742.0 1088.7,746.6 1088.9,748.7 1089.0,739.8 1089.1,753.8 1089.2,756.4 1089.4,751.1 1089.5,759.3 1089.6,745.9 1089.8,749.4 1089.9,739.0 1090.0,752.1 1090.2,753.8 1090.3,745.2 1090.4,745.4 1090.6,745.3 1090.7,750.5 1090.8,750.5 1091.0,745.8 1091.1,735.2 1091.2,742.3 1091.4,743.6 1091.5,749.2 1091.6,745.8 1091.8,744.1 1091.9,741.8 1092.0,742.1 1092.2,747.3 1092.3,748.8 1092.4,755.1 1092.6,746.9 1092.7,748.1 1092.8,750.2 1092.9,746.7 1093.1,743.3 1093.2,754.9 1093.3,744.1 1093.5,750.8 1093.6,751.9 1093.7,747.9 1093.9,755.7 1094.0,749.4 1094.1,744.9 1094.3,738.4 1094.4,745.5 1094.5,746.7 1094.7,745.0 1094.8,740.7 1094.9,746.1 1095.1,745.3 1095.2,742.7 1095.3,744.3 1095.5,744.7 1095.6,752.7 1095.7,746.8 1095.9,747.2 1096.0,749.5 1096.1,751.2 1096.3,745.6 1096.4,747.5 1096.5,743.2 1096.6,751.4 1096.8,750.2 1096.9,749.5 1097.0,742.6 1097.2,742.6 1097.3,747.2 1097.4,754.3 1097.6,734.7 1097.7,746.4 1097.8,751.1 1098.0,752.1 1098.1,747.9 1098.2,745.6 1098.4,746.7 1098.5,743.1 1098.6,748.4 1098.8,724.3 1098.9,750.8 1099.0,745.0 1099.2,747.4 1099.3,746.3 1099.4,755.2 1099.6,753.7 1099.7,747.0 1099.8,746.2 1100.0,746.5 1100.1,742.0 1100.2,749.7 1100.3,750.7 1100.5,748.1 1100.6,751.2 1100.7,750.1 1100.9,745.6 1101.0,753.7 1101.1,750.6 1101.3,756.1 1101.4,747.2 1101.5,747.6 1101.7,739.4 1101.8,749.5 1101.9,747.5 1102.1,744.7 1102.2,746.0 1102.3,732.1 1102.5,744.2 1102.6,757.0 1102.7,764.7 1102.9,750.6 1103.0,750.7 1103.1,751.6 1103.3,746.1 1103.4,751.6 1103.5,747.7 1103.7,742.5 1103.8,750.6 1103.9,747.9 1104.0,750.2 1104.2,752.7 1104.3,746.3 1104.4,744.2 1104.6,758.8 1104.7,748.1 1104.8,748.8 1105.0,750.8 1105.1,756.2 1105.2,755.1 1105.4,743.2 1105.5,750.2 1105.6,748.5 1105.8,746.6 1105.9,748.6 1106.0,754.2 1106.2,752.9 1106.3,746.0 1106.4,747.5 1106.6,761.1 1106.7,752.9 1106.8,744.6 1107.0,748.5 1107.1,747.0 1107.2,751.6 1107.4,750.0 1107.5,746.7 1107.6,747.9 1107.7,751.9 1107.9,747.7 1108.0,753.8 1108.1,741.2 1108.3,746.5 1108.4,750.3 1108.5,749.6 1108.7,752.2 1108.8,743.7 1108.9,758.5 1109.1,748.6 1109.2,758.0 1109.3,756.2 1109.5,747.9 1109.6,750.6 1109.7,749.2 1109.9,752.8 1110.0,744.9 1110.1,753.2 1110.3,745.0 1110.4,744.6 1110.5,747.7 1110.7,746.3 1110.8,755.6 1110.9,750.9 1111.1,757.6 1111.2,746.5 1111.3,744.2 1111.5,753.9 1111.6,747.7 1111.7,754.6 1111.8,755.4 1112.0,749.7 1112.1,748.1 1112.2,744.8 1112.4,748.8 1112.5,746.0 1112.6,741.3 1112.8,744.1 1112.9,751.1 1113.0,746.3 1113.2,742.1 1113.3,738.3 1113.4,745.2 1113.6,743.8 1113.7,744.7 1113.8,740.6 1114.0,742.1 1114.1,744.0 1114.2,751.1 1114.4,749.1 1114.5,753.3 1114.6,751.0 1114.8,714.8 1114.9,744.0 1115.0,744.2 1115.2,746.2 1115.3,740.3 1115.4,752.2 1115.5,747.9 1115.7,742.7 1115.8,746.5 1115.9,747.2 1116.1,744.5 1116.2,750.2 1116.3,750.1 1116.5,749.0 1116.6,741.6 1116.7,752.0 1116.9,749.8 1117.0,740.3 1117.1,743.7 1117.3,748.6 1117.4,753.9 1117.5,747.3 1117.7,747.9 1117.8,744.7 1117.9,750.5 1118.1,750.0 1118.2,745.1 1118.3,750.9 1118.5,742.8 1118.6,748.4 1118.7,746.5 1118.9,749.7 1119.0,742.6 1119.1,749.6 1119.2,743.8 1119.4,749.4 1119.5,746.6 1119.6,750.4 1119.8,745.5 1119.9,743.1 1120.0,749.3 1120.2,742.3 1120.3,747.5 1120.4,749.9 1120.6,747.0 1120.7,749.1 1120.8,743.9 1121.0,749.2 1121.1,752.3 1121.2,744.2 1121.4,747.1 1121.5,748.8 1121.6,746.1 1121.8,751.7 1121.9,748.5 1122.0,745.8 1122.2,743.9 1122.3,747.3 1122.4,745.4 1122.6,752.6 1122.7,767.3 1122.8,745.4 1122.9,744.1 1123.1,751.0 1123.2,743.4 1123.3,741.0 1123.5,747.2 1123.6,752.4 1123.7,745.9 1123.9,749.8 1124.0,749.0 1124.1,744.0 1124.3,742.9 1124.4,750.5 1124.5,750.7 1124.7,747.1 1124.8,744.6 1124.9,742.3 1125.1,750.0 1125.2,748.7 1125.3,750.2 1125.5,748.6 1125.6,745.3 1125.7,750.4 1125.9,749.1 1126.0,748.0 1126.1,748.7 1126.3,751.9 1126.4,748.8 1126.5,746.5 1126.6,750.2 1126.8,745.4 1126.9,745.2 1127.0,747.5 1127.2,750.4 1127.3,748.2 1127.4,745.3 1127.6,745.3 1127.7,748.2 1127.8,748.5 1128.0,745.7 1128.1,746.0 1128.2,744.9 1128.4,751.1 1128.5,748.2 1128.6,745.2 1128.8,750.0 1128.9,747.5 1129.0,750.1 1129.2,756.1 1129.3,743.8 1129.4,749.4 1129.6,740.5 1129.7,745.2 1129.8,748.7 1130.0,746.1 1130.1,746.5 1130.2,744.4 1130.3,748.2 1130.5,750.5 1130.6,748.6 1130.7,743.5 1130.9,755.3 1131.0,752.5 1131.1,746.0 1131.3,749.8 1131.4,746.6 1131.5,749.5 1131.7,748.1 1131.8,745.7 1131.9,744.9 1132.1,751.3 1132.2,744.2 1132.3,743.6 1132.5,742.2 1132.6,746.9 1132.7,748.6 1132.9,748.5 1133.0,734.2 1133.1,734.6 1133.3,744.6 1133.4,740.8 1133.5,746.8 1133.7,753.4 1133.8,754.8 1133.9,740.3 1134.0,754.6 1134.2,738.6 1134.3,746.0 1134.4,748.4 1134.6,744.4 1134.7,739.0 1134.8,741.0 1135.0,749.8 1135.1,746.5 1135.2,750.0 1135.4,745.6 1135.5,744.4 1135.6,753.3 1135.8,754.7 1135.9,743.6 1136.0,744.5 1136.2,745.8 1136.3,750.9 1136.4,752.9 1136.6,752.3 1136.7,747.8 1136.8,752.2 1137.0,752.3 1137.1,746.2 1137.2,740.2 1137.4,739.0 1137.5,746.6 1137.6,742.5 1137.7,745.5 1137.9,746.0 1138.0,748.1 1138.1,750.6 1138.3,742.8 1138.4,746.6 1138.5,740.8 1138.7,754.1 1138.8,750.4 1138.9,753.3 1139.1,744.5 1139.2,735.8 1139.3,746.0 1139.5,744.1 1139.6,745.4 1139.7,759.8 1139.9,751.6 1140.0,759.1 1140.1,757.7 1140.3,745.5 1140.4,758.3 1140.5,740.1 1140.7,760.0 1140.8,748.7 1140.9,754.5 1141.1,743.6 1141.2,746.1 1141.3,744.7 1141.4,744.2 1141.6,752.1 1141.7,747.4 1141.8,764.2 1142.0,749.8 1142.1,755.0 1142.2,750.1 1142.4,755.2 1142.5,754.8 1142.6,754.1 1142.8,753.7 1142.9,754.0 1143.0,740.9 1143.2,743.7 1143.3,746.4 1143.4,756.9 1143.6,745.3 1143.7,750.5 1143.8,742.0 1144.0,745.3 1144.1,758.8 1144.2,736.3 1144.4,748.6 1144.5,757.0 1144.6,741.1 1144.8,747.3 1144.9,747.2 1145.0,740.6 1145.1,754.9 1145.3,746.2 1145.4,746.8 1145.5,747.4 1145.7,748.8 1145.8,755.0 1145.9,742.4 1146.1,747.9 1146.2,760.6 1146.3,744.1 1146.5,751.4 1146.6,750.0 1146.7,744.5 1146.9,749.1 1147.0,753.5 1147.1,753.3 1147.3,733.2 1147.4,750.7 1147.5,736.8 1147.7,751.6 1147.8,746.1 1147.9,750.3 1148.1,753.9 1148.2,749.6 1148.3,737.6 1148.5,751.9 1148.6,742.8 1148.7,746.1 1148.8,753.1 1149.0,752.1 1149.1,755.2 1149.2,743.3 1149.4,744.7 1149.5,759.8 1149.6,744.8 1149.8,749.3 1149.9,748.5 1150.0,736.8 1150.2,734.2 1150.3,745.1 1150.4,752.0 1150.6,740.5 1150.7,748.4 1150.8,746.6 1151.0,750.8 1151.1,748.7 1151.2,744.2 1151.4,751.3 1151.5,748.1 1151.6,743.4 1151.8,741.7 1151.9,754.9 1152.0,747.1 1152.2,752.3 1152.3,750.6 1152.4,751.4 1152.5,740.3 1152.7,743.5 1152.8,749.3 1152.9,747.6 1153.1,748.4 1153.2,749.0 1153.3,744.3 1153.5,750.2 1153.6,744.8 1153.7,754.5 1153.9,746.9 1154.0,752.7 1154.1,750.6 1154.3,746.1 1154.4,747.4 1154.5,749.4 1154.7,742.0 1154.8,748.5 1154.9,748.8 1155.1,750.3 1155.2,743.0 1155.3,743.7 1155.5,758.4 1155.6,752.0 1155.7,746.3 1155.9,743.7 1156.0,745.6 1156.1,748.3 1156.2,741.4 1156.4,750.1 1156.5,747.4 1156.6,747.8 1156.8,747.2 1156.9,751.9 1157.0,749.0 1157.2,744.7 1157.3,743.4 1157.4,744.2 1157.6,745.8 1157.7,749.1 1157.8,745.1 1158.0,738.6 1158.1,747.4 1158.2,746.1 1158.4,751.8 1158.5,745.6 1158.6,743.1 1158.8,755.4 1158.9,749.6 1159.0,749.9 1159.2,741.1 1159.3,747.9 1159.4,745.6 1159.6,745.1 1159.7,762.6 1159.8,754.5 1159.9,743.4 1160.1,742.7 1160.2,744.6 1160.3,744.9 1160.5,751.9 1160.6,752.0 1160.7,748.7 1160.9,745.7 1161.0,750.3 1161.1,747.9 1161.3,751.2 1161.4,741.5 1161.5,756.3 1161.7,750.1 1161.8,756.0 1161.9,757.6 1162.1,743.8 1162.2,745.5 1162.3,747.5 1162.5,743.9 1162.6,745.9 1162.7,754.0 1162.9,743.8 1163.0,749.7 1163.1,752.8 1163.3,751.0 1163.4,752.0 1163.5,744.6 1163.6,749.6 1163.8,751.6 1163.9,747.6 1164.0,747.7 1164.2,746.7 1164.3,744.8 1164.4,753.4 1164.6,747.9 1164.7,744.2 1164.8,753.2 1165.0,746.4 1165.1,760.9 1165.2,750.0 1165.4,754.3 1165.5,751.1 1165.6,748.0 1165.8,760.0 1165.9,757.8 1166.0,750.3 1166.2,756.2 1166.3,742.6 1166.4,749.9 1166.6,755.6 1166.7,745.7 1166.8,746.8 1167.0,748.2 1167.1,753.4 1167.2,753.3 1167.3,757.7 1167.5,761.1 1167.6,752.5 1167.7,747.0 1167.9,752.0 1168.0,747.7 1168.1,753.6 1168.3,769.1 1168.4,753.0 1168.5,744.6 1168.7,736.3 1168.8,754.4 1168.9,742.1 1169.1,745.9 1169.2,747.8 1169.3,737.6 1169.5,751.6 1169.6,750.9 1169.7,754.0 1169.9,752.7 1170.0,768.7 1170.1,745.7 1170.3,752.8 1170.4,744.5 1170.5,755.9 1170.7,741.9 1170.8,753.2 1170.9,747.1 1171.0,757.9 1171.2,750.5 1171.3,753.4 1171.4,752.5 1171.6,752.0 1171.7,759.9 1171.8,759.7 1172.0,744.7 1172.1,757.4 1172.2,762.6 1172.4,749.5 1172.5,751.7 1172.6,750.9 1172.8,754.0 1172.9,748.5 1173.0,747.4 1173.2,752.9 1173.3,749.9 1173.4,761.3 1173.6,753.2 1173.7,756.3 1173.8,757.4 1174.0,747.5 1174.1,762.2 1174.2,751.0 1174.4,758.6 1174.5,747.1 1174.6,759.3 1174.7,748.1 1174.9,753.5 1175.0,758.9 1175.1,753.7 1175.3,753.2 1175.4,757.5 1175.5,777.0 1175.7,743.1 1175.8,752.4 1175.9,754.6 1176.1,749.6 1176.2,748.7 1176.3,748.4 1176.5,753.8 1176.6,752.6 1176.7,738.1 1176.9,744.2 1177.0,747.2 1177.1,755.1 1177.3,750.9 1177.4,762.8 1177.5,771.0 1177.7,755.7 1177.8,752.3 1177.9,755.0 1178.1,751.9 1178.2,751.4 1178.3,752.3 1178.5,752.8 1178.6,748.7 1178.7,754.7 1178.8,758.8 1179.0,755.7 1179.1,754.8 1179.2,758.2 1179.4,753.7 1179.5,752.9 1179.6,750.2 1179.8,750.0 1179.9,753.0 1180.0,753.0 1180.2,747.3 1180.3,760.9 1180.4,753.4 1180.6,756.2 1180.7,753.9 1180.8,747.3 1181.0,755.2 1181.1,757.7 1181.2,758.5 1181.4,772.6 1181.5,756.0 1181.6,744.6 1181.8,768.9 1181.9,746.8 1182.0,719.0 1182.2,756.6 1182.3,716.4 1182.4,755.0 1182.5,773.6 1182.7,712.7 1182.8,752.4" fill="none" stroke="#0000ff" stroke-width="1.67" stroke-linejoin="round" clip-path="url(#c4)"/>
<rect x="1108.7" y="691.7" width="73.2" height="16.8" rx="2.2" ry="2.2" fill="#fff" fill-opacity="0.8" stroke="#ccc" stroke-opacity="0.8" stroke-width="1.1"/>
<line x1="1112.30" y1="700.00" x2="1132.90" y2="700.00" stroke="#0000ff" stroke-width="1.67" stroke-linecap="square"/>
<text x="1136.80" y="703.30" font-size="10.73" textLength="41.40" lengthAdjust="spacingAndGlyphs">x=1024</text>
<rect x="911.00" y="689.00" width="274.00" height="120.00" fill="none" stroke="#000" stroke-width="1.67" stroke-linejoin="miter"/>
<line x1="912.40" y1="809.00" x2="912.40" y2="815.94" stroke="#000" stroke-width="1.67" stroke-linecap="butt"/>
<text x="909.49" y="832.00" font-size="10.73" textLength="6.63" lengthAdjust="spacingAndGlyphs">0</text>
<line x1="978.50" y1="809.00" x2="978.50" y2="815.94" stroke="#000" stroke-width="1.67" stroke-linecap="butt"/>
<text x="968.96" y="832.00" font-size="10.73" textLength="19.88" lengthAdjust="spacingAndGlyphs">500</text>
<line x1="1044.60" y1="809.00" x2="1044.60" y2="815.94" stroke="#000" stroke-width="1.67" stroke-linecap="butt"/>
<text x="1031.75" y="832.00" font-size="10.73" textLength="26.51" lengthAdjust="spacingAndGlyphs">1000</text>
<line x1="1110.70" y1="809.00" x2="1110.70" y2="815.94" stroke="#000" stroke-width="1.67" stroke-linecap="butt"/>
<text x="1097.85" y="832.00" font-size="10.73" textLength="26.51" lengthAdjust="spacingAndGlyphs">1500</text>
<line x1="1176.80" y1="809.00" x2="1176.80" y2="815.94" stroke="#000" stroke-width="1.67" stroke-linecap="butt"/>
<text x="1163.95" y="832.00" font-size="10.73" textLength="26.51" lengthAdjust="spacingAndGlyphs">2000</text>
<line x1="911.00" y1="695.46" x2="904.06" y2="695.46" stroke="#000" stroke-width="1.67" stroke-linecap="butt"/>
<text x="875.82" y="700.00" font-size="10.73" textLength="19.88" lengthAdjust="spacingAndGlyphs">100</text>
<line x1="911.00" y1="721.73" x2="904.06" y2="721.73" stroke="#000" stroke-width="1.67" stroke-linecap="butt"/>
<text x="882.45" y="726.00" font-size="10.73" textLength="13.25" lengthAdjust="spacingAndGlyphs">50</text>
<line x1="911.00" y1="748.00" x2="904.06" y2="748.00" stroke="#000" stroke-width="1.67" stroke-linecap="butt"/>
<text x="889.07" y="752.00" font-size="10.73" textLength="6.63" lengthAdjust="spacingAndGlyphs">0</text>
<line x1="911.00" y1="774.27" x2="904.06" y2="774.27" stroke="#000" stroke-width="1.67" stroke-linecap="butt"/>
<text x="873.72" y="778.00" font-size="10.73" textLength="21.98" lengthAdjust="spacingAndGlyphs">−50</text>
<line x1="911.00" y1="800.54" x2="904.06" y2="800.54" stroke="#000" stroke-width="1.67" stroke-linecap="butt"/>
<text x="867.09" y="805.00" font-size="10.73" textLength="28.61" lengthAdjust="spacingAndGlyphs">−100</text>
<text x="1044.82" y="850.00" font-size="10.73" textLength="6.36" lengthAdjust="spacingAndGlyphs">Y</text>
<text transform="translate(857.30,749.60) rotate(-90)" x="-17.41" y="0" font-size="10.73" textLength="34.82" lengthAdjust="spacingAndGlyphs">counts</text>
<text transform="translate(1193.90,749.40) rotate(90)" x="-19.35" y="0" font-size="10.73" textLength="38.70" lengthAdjust="spacingAndGlyphs">cut in y</text>
</svg>
</body></html>
